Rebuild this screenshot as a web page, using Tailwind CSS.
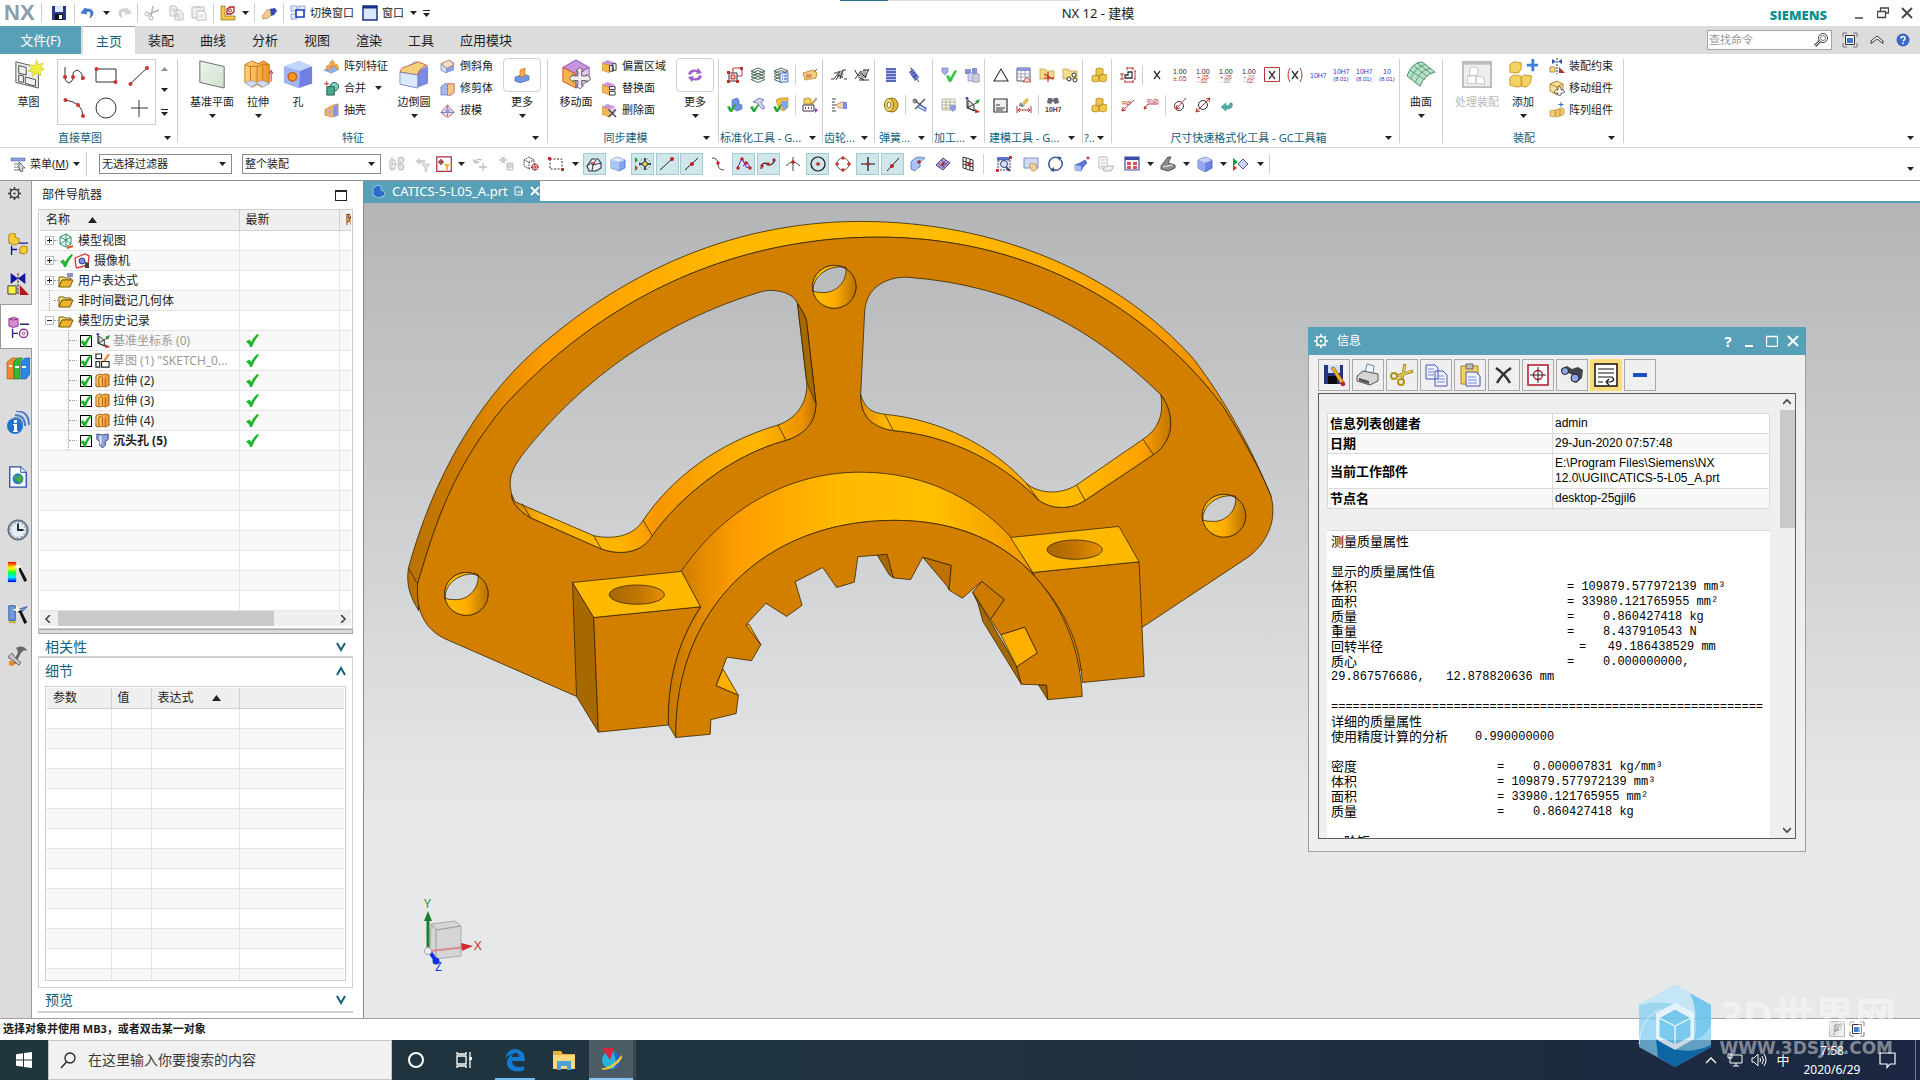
<!DOCTYPE html>
<html lang="zh-CN">
<head>
<meta charset="utf-8">
<title>NX 12 - 建模</title>
<script src="https://cdn.jsdelivr.net/npm/@tailwindcss/browser@4"></script>
</head>
<body class="relative flex h-screen flex-col overflow-hidden bg-white font-['Noto_Sans','Noto_Sans_CJK_SC',sans-serif] text-[11px] leading-[14px] text-[#1c1c1c]">

<!-- shared gradients: kept rendered, a display:none svg drops its paint servers -->
<svg class="absolute size-0" aria-hidden="true">
 <defs>
  <linearGradient id="gOr" x1="0" y1="0" x2="1" y2="0"><stop offset="0" stop-color="#ffd27a"/><stop offset="1" stop-color="#f0932a"/></linearGradient>
  <linearGradient id="gPl" x1="0" y1="0" x2="1" y2="1"><stop offset="0" stop-color="#eef3ee"/><stop offset="1" stop-color="#cfe3cf"/></linearGradient>
  <linearGradient id="gRain" x1="0" y1="0" x2="0" y2="1"><stop offset="0" stop-color="#f00"/><stop offset=".3" stop-color="#ff0"/><stop offset=".55" stop-color="#0f4"/><stop offset=".75" stop-color="#0ef"/><stop offset="1" stop-color="#00f"/></linearGradient>
 </defs>
</svg>

<!-- icon library -->
<svg class="hidden" aria-hidden="true">
 <symbol id="tri" viewBox="0 0 7 4"><path d="M0 0h7L3.500 4z" fill="#222"/></symbol>
 <symbol id="tribar" viewBox="0 0 7 7"><path d="M0 0h7v1H0zM0 3h7L3.500 7z" fill="#222"/></symbol>
 <symbol id="check" viewBox="0 0 14 14"><path d="M0 8l4-2 1.500 2.500Q8 3 12.500 0L14 1Q9 7 6.500 14H4.500Q3 10 0 8z" fill="#1fb52f"/></symbol>
 <symbol id="save" viewBox="0 0 16 16"><path d="M1 1h14v14H1z" fill="#29388c"/><path d="M4 1h8v6H4z" fill="#dfe8fa"/><path d="M4 9h8v6H4z" fill="#111"/><path d="M8 10h3v4H8z" fill="#fff"/></symbol>
 <symbol id="undo" viewBox="0 0 16 16"><path d="M5 3L1 8l6 1-1-2c4-2 6 1 4 6 5-4 4-10-4-9z" fill="#3f7ad6" stroke="#2a56a8" stroke-width=".6"/></symbol>
 <symbol id="redo" viewBox="0 0 16 16"><path d="M11 3l4 5-6 1 1-2c-4-2-6 1-4 6-5-4-4-10 4-9z" fill="#d4d4d4" stroke="#b5b5b5" stroke-width=".6"/></symbol>
 <symbol id="cutg" viewBox="0 0 16 16"><path d="M9 1L7 11M15 5L5 9" stroke="#b5b5b5" stroke-width="1.500"/><circle cx="3" cy="9" r="2" fill="none" stroke="#b5b5b5"/><circle cx="7" cy="13" r="2" fill="none" stroke="#b5b5b5"/></symbol>
 <symbol id="copyg" viewBox="0 0 16 16"><path d="M2 1h5l2 2v8H2zM7 5h5l3 3v7H7z" fill="#f4f4f4" stroke="#bcbcbc"/><path d="M9 9h4M9 11h4M9 13h4M3.500 4h3M3.500 6h3" stroke="#ccc"/></symbol>
 <symbol id="pasteg" viewBox="0 0 16 16"><path d="M1 2h12v11H1z" fill="#eee" stroke="#bcbcbc"/><path d="M5 1h4v2H5z" fill="#ccc"/><path d="M6 6h6l3 3v6H6z" fill="#fff" stroke="#bcbcbc"/><path d="M8 10h5M8 12h5" stroke="#ccc"/></symbol>
 <symbol id="mcs" viewBox="0 0 16 16"><path d="M1 1h4v10h10v4H1z" fill="#f2c84b" stroke="#8a6a10" stroke-width=".7"/><path d="M7 4l3-2h4v5l-3 2H7z" fill="#fff" stroke="#b01828" stroke-width="1.300"/><circle cx="10" cy="5.500" r="1.500" fill="none" stroke="#b01828"/></symbol>
 <symbol id="hand" viewBox="0 0 16 16"><path d="M1 11l5-6 5-1 1 5-5 4-5 1z" fill="#f0cd8a" stroke="#a97c3c" stroke-width=".6"/><path d="M9 4l5-1 2 3-3 4-3 1z" fill="#3948b8"/></symbol>
 <symbol id="switch" viewBox="0 0 16 16"><path d="M1 1h6v5H1zM9 1h6v5H9zM1 9h6v5H1z" fill="#e6eefc" stroke="#8ca4cf"/><path d="M6 5h8v7H6z" fill="#fff" stroke="#1b38c8" stroke-width="1.600"/></symbol>
 <symbol id="win" viewBox="0 0 16 16"><path d="M1 1h14v14H1z" fill="#dbe8fb" stroke="#1c2f86" stroke-width="1.500"/><path d="M1 1h14v2.500H1z" fill="#1c2f86"/></symbol>
 <!-- large -->
 <symbol id="sketch" viewBox="0 0 32 32"><path d="M2 3l24 6v22L2 25z" fill="#eef0ee" stroke="#555"/><path d="M5 7l8 2v8l-8-2zM5 17l5 1v7l-5-1zM12 19l11 3v7l-11-3z" fill="none" stroke="#444"/><path d="M24 1l2 5 5-2-2 5 4 2-5 2 1 5-5-3-4 4v-5l-5-1 4-3-3-4 6 1z" fill="#f1ef3e" stroke="#b8b822" stroke-width=".5"/></symbol>
 <symbol id="plane" viewBox="0 0 32 32"><path d="M3 2l26 6v23L3 25z" fill="url(#gPl)" stroke="#666"/></symbol>
 <symbol id="extr" viewBox="0 0 32 32"><path d="M2 6l8-4 6 3 6-3 6 4v20l-8 4-5-3-5 3-8-5z" fill="url(#gOr)" stroke="#c57516"/><path d="M2 6l6 2 7 0 6-2 7 0M8 8v20M15 8v17M21 7v21" fill="none" stroke="#c57516"/><path d="M2 25l7 5 6-4 6 4 7-4-7-3-6 2-6-2z" fill="#cfdcf8" stroke="#7f93cf" stroke-width=".6"/><path d="M30 24V14M28 16l2-4 2 4" stroke="#b22" fill="none"/></symbol>
 <symbol id="hole" viewBox="0 0 32 32"><path d="M1 8l16-6 14 6v18l-15 5L1 25z" fill="#8ea2ec"/><path d="M1 8l16-6 14 6-13 5z" fill="#c2d5fb"/><path d="M18 13l13-5v18l-14 5z" fill="#6f80de"/><path d="M1 8l17 5-1 18-16-6z" fill="#9fb4f3"/><circle cx="10" cy="19" r="4.500" fill="#f59a1e" stroke="#d25b1a" stroke-width="1.500"/></symbol>
 <symbol id="blend" viewBox="0 0 32 32"><path d="M1 14l16-12 14 6v18l-12 5-18-4z" fill="#7c8be2"/><path d="M8 8L18 2l13 6-7 3z" fill="#c2d5fb"/><path d="M1 14q2-6 7-6L21 3l9 4q-9 3-10 10z" fill="#f5d27c" stroke="#c33" stroke-width=".8"/><path d="M1 14l19 3v14L1 27z" fill="#dbe9fc" stroke="#5b78c0" stroke-width=".7"/></symbol>
 <symbol id="moveface" viewBox="0 0 32 32"><path d="M2 9l14-8 14 8-14 7z" fill="#c793dd" stroke="#8a4fa8"/><path d="M2 9l14 7v15L2 24z" fill="#f7b64b" stroke="#d2452a"/><path d="M16 16l14-7v14l-14 8z" fill="#e9c7ef" stroke="#8a4fa8"/><path d="M20 9l4 4h-2v5h5v-2l5 5-5 4v-2h-5v5h2l-4 4-4-4h2v-5h-5v2l-4-4 4-5v2h5v-5h-2z" fill="#eee" stroke="#555"/></symbol>
 <symbol id="surf" viewBox="0 0 32 32"><path d="M1 18Q6 4 17 3l14 11Q20 16 15 29z" fill="#b9e0c8" stroke="#3f8a63"/><path d="M5 21Q10 8 21 6M10 25Q14 12 26 10M4 12l16 10M8 7l15 12M12 4l15 12" fill="none" stroke="#3f8a63" stroke-width=".8"/></symbol>
 <symbol id="procasm" viewBox="0 0 32 32"><path d="M1 3h30v27H1z" fill="#eee" stroke="#bbb" stroke-width="2"/><path d="M1 2h30v4H1z" fill="#bbb"/><path d="M6 18h9v8H6zM15 18l9 2v7l-9-1zM8 10l5-2 4 2v7l-9 1z" fill="#fff" stroke="#c4c4c4"/></symbol>
 <symbol id="addc" viewBox="0 0 32 32"><path d="M2 6l4-3 8 1v7l-3 4-9-1z" fill="#f5d264" stroke="#c79722"/><path d="M2 20l4-3 8 1 1 10-4 2-9-2zM14 20l3-3 8 1-1 8-5 4-5-1z" fill="#f5d264" stroke="#c79722"/><path d="M25 0h3v5h4v3h-4v5h-3V8h-5V5h5z" fill="#3f7fd8"/></symbol>
 <symbol id="more1" viewBox="0 0 16 16"><path d="M1 10l9-3 5 2v4l-9 3-5-2z" fill="#6f95e2" stroke="#3e62b4" stroke-width=".6"/><path d="M6 3l5-2v8l-5 1z" fill="#f4a952" stroke="#bf6f1c" stroke-width=".6"/></symbol>
 <symbol id="more2" viewBox="0 0 16 16"><path d="M1 7q2-6 9-4l1-2 4 5-6 1 1-2Q5 4 4 8zM15 9q-2 6-9 4l-1 2-4-5 6-1-1 2q5 1 6-3z" fill="#9b63c4"/></symbol>
 <!-- small -->
 <symbol id="arrf" viewBox="0 0 16 16"><path d="M0 12l9-5 7 4-8 4z" fill="#8db1ec" stroke="#4b6cb8" stroke-width=".5"/><path d="M2 8l3-2 2 1v4l-3 1zM6 4l3-3 2 2v5l-3 1zM11 7l2-2 2 2v3l-2 1z" fill="#f5a648" stroke="#c87a1a" stroke-width=".5"/></symbol>
 <symbol id="unite" viewBox="0 0 16 16"><circle cx="11" cy="6" r="4.500" fill="#7fd0bc" stroke="#1d5c50"/><path d="M3 6h8v9H3z" fill="#49a98d" stroke="#1d5c50"/><path d="M3 0v5M0 3h5" stroke="#c22"/></symbol>
 <symbol id="shell" viewBox="0 0 16 16"><path d="M1 7l9-5 5-1v12l-6 2-8-2z" fill="#f1b269" stroke="#a8682a" stroke-width=".6"/><path d="M10 4l5-3v12l-5 2z" fill="#7f96e4"/><path d="M3 8l5-2v6l-5-1z" fill="#caa"/></symbol>
 <symbol id="chamf" viewBox="0 0 16 16"><path d="M1 5l9-4 5 3v8l-8 3-6-3z" fill="#8ea2ec"/><path d="M1 5l9-4 5 5-8 4z" fill="#f1dfc0" stroke="#c55" stroke-width=".8"/><path d="M1 5l6 5v5l-6-3z" fill="#cfe0ff" stroke="#557" stroke-width=".5"/></symbol>
 <symbol id="trim" viewBox="0 0 16 16"><path d="M1 6l4-3h10v9l-3 3H1z" fill="#a5b7f2" stroke="#4d5fb0" stroke-width=".6"/><path d="M8 3h7v9l-3 3H8z" fill="#f6c489" stroke="#c33" stroke-width=".8" stroke-dasharray="2 1"/></symbol>
 <symbol id="draft" viewBox="0 0 16 16"><path d="M8 2l7 8-6 5H7l-6-5z" fill="#f4dfe3" stroke="#b35" stroke-width=".8"/><path d="M8 2v12M1 10h14" stroke="#57a" /><path d="M5 8l3-3 3 3-3 4z" fill="#8aa3e8"/></symbol>
 <symbol id="fcube" viewBox="0 0 16 16"><path d="M0 4l6-3 8 3-6 3z" fill="#c793dd"/><path d="M0 4l8 3v8l-8-3z" fill="#f7b64b" stroke="#c66a1d" stroke-width=".5"/><path d="M8 7l6-3v7l-6 4z" fill="#e5c3ec"/></symbol>
 <symbol id="off" viewBox="0 0 16 16"><use href="#fcube"/><path d="M8 7h4v6H8zM11 5h4v7h-4z" fill="#fff" stroke="#333"/></symbol>
 <symbol id="repl" viewBox="0 0 16 16"><use href="#fcube"/><path d="M8 6h6v3H8zM8 11h6v4H8z" fill="#fff" stroke="#333"/></symbol>
 <symbol id="del" viewBox="0 0 16 16"><use href="#fcube"/><path d="M7 7l8 8M15 7l-8 8" stroke="#444" stroke-width="1.400"/></symbol>
 <symbol id="nodes" viewBox="0 0 16 16"><path d="M6 1h9v8H6z" fill="#fff" stroke="#b33"/><path d="M2 6h8v8H2z" fill="#fff" stroke="#333"/><path d="M4 8h4v4H4z" fill="#f6c79a" stroke="#b33"/><path d="M0 4h3v3H0zM0 13h3v3H0zM9 13h3v3H9zM13 0h3v3h-3z" fill="#b33"/></symbol>
 <symbol id="layers" viewBox="0 0 16 16"><path d="M1 12.500l7-3 7 3-7 3zM1 9.500l7-3 7 3-7 3zM1 6.500l7-3 7 3-7 3zM1 4l7-3 7 3-7 3z" fill="#f5f9f5" stroke="#4e6b5a"/></symbol>
 <symbol id="layers2" viewBox="0 0 16 16"><path d="M1 12.500l7-3 7 3-7 3zM1 9.500l7-3 7 3-7 3zM1 6.500l7-3 7 3-7 3zM1 4l7-3 7 3-7 3z" fill="#f5f9f5" stroke="#4e6b5a"/><path d="M7 6h8v9H7z" fill="#dfe8ff" stroke="#5b74c4"/><path d="M9 9h1M11 9h3M9 12h1M11 12h3" stroke="#35a"/></symbol>
 <symbol id="tag" viewBox="0 0 16 16"><path d="M1 6l10-3 4 3-1 5-11 2z" fill="#f8cd7c" stroke="#b9812a" stroke-width=".8"/><path d="M4 8h6M4 10h5" stroke="#b55"/><path d="M12 5l3-3" stroke="#555"/></symbol>
 <symbol id="chk1" viewBox="0 0 16 16"><path d="M5 3l5-2 2 2v4l3 1v4l-5 2-5-3z" fill="#6f95e2" stroke="#3e62b4" stroke-width=".6"/><path d="M0 10l3-1 1 3 4-5 1 1-4 7H3z" fill="#28a53a"/></symbol>
 <symbol id="chk2" viewBox="0 0 16 16"><path d="M3 5l6-4 5 2-3 2 4 6-3 1-5-6z" fill="#cfd6ea" stroke="#55a" stroke-width=".7"/><path d="M0 10l3-1 1 3 4-5 1 1-4 7H3z" fill="#28a53a"/></symbol>
 <symbol id="chk3" viewBox="0 0 16 16"><path d="M3 3l5-2h7v9l-4 4-5-2z" fill="#f2bd3e" stroke="#a77c18" stroke-width=".6"/><path d="M8 4h7v7l-5 2z" fill="#7fa6ea"/><path d="M0 10l3-1 1 3 4-5 1 1-4 7H3z" fill="#28a53a"/></symbol>
 <symbol id="box4" viewBox="0 0 16 16"><path d="M2 2l4-1 3 1v5H2z" fill="#f5d264" stroke="#c79722"/><path d="M1 8h11v6H1z" fill="#fff" stroke="#335"/><path d="M3 11h1M6 11h1M9 11h1" stroke="#b33" stroke-width="2"/><path d="M9 7l5-6 1 1-5 6z" fill="#e8b04a" stroke="#733" stroke-width=".4"/><path d="M13 11l3 2-3 3z" fill="#93c"/></symbol>
 <symbol id="gear1" viewBox="0 0 16 16"><path d="M6 4l7-1-1 7-5 1z" fill="#b5b5b5"/><path d="M0 12h3l3-4h2L5 13M9 12l3-9h3M13 12h3M3 6h5l1-2M8 8l4 3" stroke="#333" fill="none"/></symbol>
 <symbol id="gear2" viewBox="0 0 16 16"><path d="M5 5l7-3 1 8-6 3z" fill="#aaa"/><path d="M1 3q1 5 5 6M15 2l-4 8M5 13h10M1 12l6-8M9 3h6M7 6l5 5M4 10l6 3" stroke="#333" fill="none"/></symbol>
 <symbol id="dash" viewBox="0 0 16 16"><path d="M1 2h4M1 5h3M1 8h4M1 11h3M1 14h4" stroke="#444"/><path d="M5 8l5-3h3v6H8z" fill="#f4d6a8" stroke="#a55" stroke-width=".6"/><path d="M12 5h4v7h-4z" fill="#7f8de0"/></symbol>
 <symbol id="spr1" viewBox="0 0 16 16"><path d="M3 1h10v14H3z" fill="#b9c2f0"/><path d="M3 2h10M3 5h10M3 8h10M3 11h10M3 14h10" stroke="#3a4aa8" stroke-width="1.500"/></symbol>
 <symbol id="spr2" viewBox="0 0 16 16"><path d="M4 1q3 0 2 3" fill="none" stroke="#555"/><path d="M3 5l4-3 6 8-4 4z" fill="#4555b4"/><path d="M4 7l4-3M6 9l4-3M8 12l4-3" stroke="#c9d0f4" stroke-width=".7"/><path d="M11 12l2 3" stroke="#555"/></symbol>
 <symbol id="ring" viewBox="0 0 16 16"><ellipse cx="9" cy="8" rx="6" ry="7" fill="#e0b93a" stroke="#8a6a10"/><ellipse cx="6" cy="8" rx="4.500" ry="6.500" fill="#f5dc78" stroke="#8a6a10"/><ellipse cx="6" cy="8" rx="2" ry="3" fill="#fff" stroke="#8a6a10"/></symbol>
 <symbol id="scis" viewBox="0 0 16 16"><path d="M2 3l12 9M3 12L13 2" stroke="#555" stroke-width="1.400"/><path d="M7 8l7 3-1 3-7-4z" fill="none" stroke="#5a74d8" stroke-width="1.300"/><circle cx="3" cy="4" r="2" fill="none" stroke="#555"/></symbol>
 <symbol id="chkv" viewBox="0 0 16 16"><path d="M1 1h6v4L4 8 1 5z" fill="#a6b0e4" stroke="#6672b8" stroke-width=".6"/><path d="M5 9l3-1 1 3 5-8 2 1-6 11H8z" fill="#35c245"/></symbol>
 <symbol id="gridv" viewBox="0 0 16 16"><path d="M1 2h13v11H1zM1 5h13M1 8h13M1 11h13M5 2v11M9 2v11" fill="#f8f8ec" stroke="#a8a890" stroke-width=".8"/><path d="M9 8h6v4l-3 3-3-3z" fill="#8c9be0"/></symbol>
 <symbol id="bld" viewBox="0 0 16 16"><path d="M1 2h6v5H1zM8 1h5v6H8z" fill="#8793d8"/><path d="M4 6h6v8H4z" fill="#cfd6f4" stroke="#6672b8" stroke-width=".6"/><path d="M9 7h6v8H9z" fill="#fff" stroke="#889"/><path d="M10 9h4M10 11h4M10 13h4" stroke="#99a"/></symbol>
 <symbol id="csys" viewBox="0 0 16 16"><path d="M4 3l6 5v6L4 11z" fill="#dfe8e6" stroke="#333"/><path d="M3 0v11l12 4M3 11l11-6" fill="none" stroke="#333"/><path d="M11 4l5-2-2 5z" fill="#1c9a3c"/><path d="M1 2h4L3 0z" fill="#22c"/><path d="M11 12l5 3-5 1z" fill="#c22"/></symbol>
 <symbol id="triup" viewBox="0 0 16 16"><path d="M8 2l7 12H1z" fill="none" stroke="#333" stroke-width="1.100"/></symbol>
 <symbol id="tbl" viewBox="0 0 16 16"><path d="M1 1h13v13H1z" fill="#fff" stroke="#557"/><path d="M1 1h13v3H1z" fill="#8c97d8"/><path d="M1 7h13M1 10h13M5 4v10M9 4v10" stroke="#889" stroke-width=".7"/><path d="M11 10l4 5H7z" fill="#f7dada" stroke="#b33" stroke-width=".8"/></symbol>
 <symbol id="fold1" viewBox="0 0 16 16"><path d="M1 2h5l1 2h8v8H1z" fill="#f5dc86" stroke="#b8963a" stroke-width=".7"/><path d="M9 5v10M5 11h10M5 7l9 5" stroke="#c03030" stroke-width="1.200"/></symbol>
 <symbol id="fold2" viewBox="0 0 16 16"><path d="M1 2h5l1 2h8v8H1z" fill="#f5dc86" stroke="#b8963a" stroke-width=".7"/><circle cx="7" cy="12" r="2" fill="#fff" stroke="#333"/><circle cx="12" cy="8" r="2" fill="#fff" stroke="#333"/><circle cx="13" cy="13" r="2" fill="#fff" stroke="#333"/></symbol>
 <symbol id="note" viewBox="0 0 16 16"><path d="M1 2h13v13H1z" fill="#f2f2f2" stroke="#333" stroke-width="1.200"/><path d="M3 8h4M3 11h9M3 13h7" stroke="#333"/></symbol>
 <symbol id="brush" viewBox="0 0 16 16"><path d="M6 6l5-5 2 2-4 5z" fill="#e6b84a"/><path d="M4 5l5 4-3 1-3-1z" fill="#8a8a8a"/><path d="M2 13h12M1 9v7M15 9v7M4 11l-2 2 2 2M12 11l2 2-2 2" stroke="#b33" fill="none"/></symbol>
 <symbol id="bin7" viewBox="0 0 16 16"><path d="M3 1h4l1 2 1-2h4l1 5-4 1-2-3-2 3-4-1z" fill="#667"/><text x="0" y="15" font-size="7" font-weight="700" fill="#633" font-family="Liberation Sans">10H7</text></symbol>
 <symbol id="boxes" viewBox="0 0 16 16"><path d="M5 2l3-1 4 1v5l-3 2-4-1zM1 9l3-1 4 1v5l-3 1-4-1zM8 9l3-2 5 1v5l-3 2-5-1z" fill="#efc54a" stroke="#b08a1e" stroke-width=".8"/></symbol>
 <symbol id="dim" viewBox="0 0 16 16"><path d="M8 5h4v6H5v-3h3z" fill="none" stroke="#333" stroke-width="1.300"/><path d="M7 1h6M7 0v3M13 0v3M2 7v5M0 7h4M0 12h4M15 4v8M14 4h2M14 12h2M5 15h8M5 13v3M13 13v3" stroke="#b33" fill="none"/></symbol>
 <symbol id="X" viewBox="0 0 16 16"><path d="M5 4l6 8M11 4l-6 8" stroke="#333" stroke-width="1.300"/></symbol>
 <symbol id="Xb" viewBox="0 0 16 16"><path d="M.5.500h15v14H.5z" fill="#fff" stroke="#b33"/><path d="M5 4l6 8M11 4l-6 8" stroke="#333" stroke-width="1.300"/></symbol>
 <symbol id="Xp" viewBox="0 0 16 16"><path d="M3 1Q-1 8 3 15M13 1q4 7 0 14" fill="none" stroke="#b33"/><path d="M5 4l6 8M11 4l-6 8" stroke="#333" stroke-width="1.300"/></symbol>
 <symbol id="t1" viewBox="0 0 16 16"><text x="1" y="7" font-size="7" fill="#222" font-family="Liberation Sans">1.00</text><text x="1" y="14" font-size="7" fill="#b33" font-family="Liberation Sans">±.05</text></symbol>
 <symbol id="t2" viewBox="0 0 16 16"><text x="1" y="7" font-size="7" fill="#222" font-family="Liberation Sans">1.00</text><text x="2" y="12" font-size="6" fill="#b33" font-family="Liberation Sans">+.05</text><text x="2" y="16" font-size="6" fill="#b33" font-family="Liberation Sans">-.02</text></symbol>
 <symbol id="t3" viewBox="0 0 16 16"><text x="1" y="7" font-size="7" fill="#222" font-family="Liberation Sans">1.00</text><text x="2" y="12" font-size="6" fill="#b33" font-family="Liberation Sans">+.05</text><text x="2" y="16" font-size="6" fill="#888" font-family="Liberation Sans">-.00</text></symbol>
 <symbol id="t4" viewBox="0 0 16 16"><text x="1" y="7" font-size="7" fill="#222" font-family="Liberation Sans">1.00</text><text x="2" y="12" font-size="6" fill="#888" font-family="Liberation Sans">+.00</text><text x="2" y="16" font-size="6" fill="#b33" font-family="Liberation Sans">-.02</text></symbol>
 <symbol id="h1" viewBox="0 0 16 16"><text x="0" y="11" font-size="7" fill="#33b" font-family="Liberation Sans">10H7</text></symbol>
 <symbol id="h2" viewBox="0 0 16 16"><text x="0" y="7" font-size="7" fill="#33b" font-family="Liberation Sans">10H7</text><text x="0" y="14" font-size="6" fill="#33b" font-family="Liberation Sans">(8.01)</text></symbol>
 <symbol id="h3" viewBox="0 0 16 16"><text x="4" y="7" font-size="7" fill="#33b" font-family="Liberation Sans">10</text><text x="0" y="14" font-size="6" fill="#33b" font-family="Liberation Sans">(8.01)</text></symbol>
 <symbol id="r1" viewBox="0 0 16 16"><path d="M2 14L14 3M2 14l1-4M2 14l4-1" stroke="#b33" fill="none"/><text x="2" y="8" font-size="6" fill="#b33" font-family="Liberation Sans">RØ</text></symbol>
 <symbol id="r2" viewBox="0 0 16 16"><path d="M1 12l4-5h10M1 12l1-3M1 12l3-1" stroke="#b33" fill="none"/><text x="4" y="6" font-size="6" fill="#b33" font-family="Liberation Sans">R|Ø|</text></symbol>
 <symbol id="r3" viewBox="0 0 16 16"><circle cx="7" cy="9" r="4.500" fill="none" stroke="#333"/><path d="M4 12L14 1M4 12l1-4M4 12l4-1" stroke="#b33" fill="none"/></symbol>
 <symbol id="r4" viewBox="0 0 16 16"><circle cx="8" cy="8" r="4.500" fill="none" stroke="#333"/><path d="M1 15L15 1M1 15l1-4M1 15l4-1M15 1l-1 4M15 1l-4 1" stroke="#b33" fill="none"/></symbol>
 <symbol id="ret" viewBox="0 0 16 16"><path d="M3 10l5-4v3q4 0 4-3l2 0q2 6-6 6v2z" fill="#4fb0a8" stroke="#2c817a" stroke-width=".5"/></symbol>
 <symbol id="cons" viewBox="0 0 16 16"><path d="M3 1l4 2.500L3 6zM13 1L9 3.500 13 6z" fill="#35a"/><path d="M8 0v16" stroke="#333" stroke-dasharray="2 1"/><path d="M1 9h5v5H1z" fill="#f5e46a" stroke="#a87"/><path d="M10 9v6h6z" fill="#b03030"/></symbol>
 <symbol id="movec" viewBox="0 0 16 16"><path d="M1 4l7-3 6 3v7l-6 4-7-4z" fill="#f9dda0" stroke="#b98a2e"/><path d="M1 4l7 3 6-3M8 7v8" stroke="#b98a2e" fill="none"/><path d="M10 6l2 2v2h2l2 2-2 1h-2v2l-2 1-1-2v-1H6l-1-1 2-2h2V8z" fill="#fff" stroke="#333" stroke-width=".7"/></symbol>
 <symbol id="arrc" viewBox="0 0 16 16"><path d="M1 9l3-1 3 1v5l-3 1-3-1zM6 8l3-1 3 1v5l-3 2-3-1zM10 7l2-1 3 1v5l-3 2-2-1z" fill="#f9cf72" stroke="#b98a2e" stroke-width=".7"/><path d="M12 0v5M9.500 2.500h5" stroke="#36c"/></symbol>
 <!-- selection bar -->
 <symbol id="menu" viewBox="0 0 16 16"><path d="M1 2h14v3H1z" fill="#8ea2dc" stroke="#5266a8" stroke-width=".6"/><path d="M4 8h8M4 11h8M4 14h6" stroke="#777"/><path d="M9 6l6 6h-3l1 3-2 1-1-3-1 1z" fill="#ddd" stroke="#444" stroke-width=".7"/></symbol>
 <symbol id="sg1" viewBox="0 0 16 16"><path d="M1 4h5v9H1zM3 1v14M3 8h9" fill="none" stroke="#b9b9b9"/><circle cx="12" cy="4" r="3" fill="#e4e4e4" stroke="#b9b9b9"/><circle cx="12" cy="11" r="3" fill="#e4e4e4" stroke="#b9b9b9"/></symbol>
 <symbol id="sg2" viewBox="0 0 16 16"><path d="M1 5l5-3v2h5v3H6v2z" fill="#cfcfcf"/><path d="M8 8h8l-3 4v4l-2-1v-3z" fill="#e2e2e2" stroke="#bbb" stroke-width=".6"/></symbol>
 <symbol id="selp" viewBox="0 0 16 16"><path d="M.8.800h14.500v14.500H.8z" fill="#fff" stroke="#b3283a" stroke-width="1.200"/><path d="M5 3v6M2 6h6" stroke="#333"/><circle cx="5" cy="6" r="2" fill="none" stroke="#b33"/><path d="M8 8h6l-2 3v3h-2v-3z" fill="#f0b73a"/></symbol>
 <symbol id="sg3" viewBox="0 0 16 16"><path d="M2 7q1-5 7-3M2 7L0 3M2 7l4-1M10 7v8M6 11h8" fill="none" stroke="#bdbdbd" stroke-width="1.300"/></symbol>
 <symbol id="sg4" viewBox="0 0 16 16"><path d="M1 3h8v2H1zM3 1h4v6H3z" fill="#cfcfcf"/><path d="M9 7h6v7H9zM9 9h6M9 11h6" fill="#eee" stroke="#bdbdbd"/></symbol>
 <symbol id="sel5" viewBox="0 0 16 16"><path d="M1 4l5-3 5 3v6l-5 3-5-3zM1 4l5 2 5-2M6 6v7" fill="none" stroke="#333" stroke-dasharray="1.500 1"/><circle cx="12" cy="11" r="3" fill="#fff" stroke="#b33"/><path d="M12 7v8M8 11h8" stroke="#b33"/></symbol>
 <symbol id="sel6" viewBox="0 0 16 16"><path d="M2 3h12v10H2z" fill="none" stroke="#333" stroke-dasharray="2 1.500"/><path d="M0 1h3v3H0zM13 12h3v3h-3z" fill="#b33"/></symbol>
 <symbol id="s1" viewBox="0 0 16 16"><path d="M1 10l5-7 6 0 3 4v5l-5 3H3z" fill="#e9eef5" stroke="#334" stroke-width="1.100"/><path d="M1 10q4-4 6-1l-1 6M7 9l3-5M7 9l8-2" stroke="#334" fill="none"/><path d="M5 7h4" stroke="#c33" stroke-width="1.500"/></symbol>
 <symbol id="cube" viewBox="0 0 16 16"><path d="M1 4l6-3 8 3v8l-6 3-8-3z" fill="#7fa6ea" stroke="#3e62b4" stroke-width=".7"/><path d="M1 4l8 2v9l-8-3z" fill="#a9c6f7"/><path d="M1 4l6-3 8 3-6 2z" fill="#dbe9fc"/></symbol>
 <symbol id="s3" viewBox="0 0 16 16"><path d="M0 1l3 3-3 3z" fill="#1c9a3c"/><path d="M0 9l3 3-3 3z" fill="#c33"/><circle cx="10" cy="8" r="5.500" fill="none" stroke="#555" stroke-dasharray="1 2"/><path d="M10 2v12M4 8h12" stroke="#222" stroke-width="1.500" stroke-dasharray="3 6"/><circle cx="10" cy="8" r="2.500" fill="#e9da5a" stroke="#333"/></symbol>
 <symbol id="s4" viewBox="0 0 16 16"><path d="M1 14L13 3" stroke="#222"/><circle cx="13" cy="3" r="2" fill="#b22"/></symbol>
 <symbol id="s5" viewBox="0 0 16 16"><path d="M1 14L14 2" stroke="#222"/><circle cx="8" cy="8" r="2" fill="#b22"/></symbol>
 <symbol id="s6" viewBox="0 0 16 16"><path d="M2 2q6 0 6 6t6 6" stroke="#444" fill="none"/><circle cx="8" cy="7" r="1.700" fill="#b22"/></symbol>
 <symbol id="s7" viewBox="0 0 16 16"><path d="M1 13L6 2l4 9 4 1-3-6-4 4" stroke="#62c" fill="none"/><circle cx="2" cy="12" r="1.700" fill="#b22"/><circle cx="6" cy="3" r="1.700" fill="#b22"/><circle cx="10" cy="7" r="1.700" fill="#b22"/><circle cx="14" cy="12" r="1.700" fill="#b22"/></symbol>
 <symbol id="s8" viewBox="0 0 16 16"><path d="M1 13q1-8 6-5t8-4" stroke="#222" fill="none" stroke-width="1.200"/><circle cx="2" cy="10" r="1.700" fill="#b22"/><circle cx="8" cy="8" r="1.700" fill="#b22"/><circle cx="14" cy="4" r="1.700" fill="#b22"/></symbol>
 <symbol id="s9" viewBox="0 0 16 16"><path d="M8 1v14M1 10q7-8 14 0" stroke="#444" fill="none"/><circle cx="8" cy="6" r="1.700" fill="#b22"/></symbol>
 <symbol id="s10" viewBox="0 0 16 16"><circle cx="8" cy="8" r="7" fill="none" stroke="#111" stroke-width="1.200"/><circle cx="8" cy="8" r="1.800" fill="#b22"/></symbol>
 <symbol id="s11" viewBox="0 0 16 16"><circle cx="8" cy="8" r="6" fill="none" stroke="#555"/><circle cx="8" cy="2" r="1.800" fill="#c33"/><circle cx="8" cy="14" r="1.800" fill="#c33"/><circle cx="2" cy="8" r="1.800" fill="#c33"/><circle cx="14" cy="8" r="1.800" fill="#c33"/></symbol>
 <symbol id="s12" viewBox="0 0 16 16"><path d="M8 1v14M1 8h14" stroke="#111" stroke-width="1.200"/><circle cx="8" cy="8" r="1.700" fill="#b22"/></symbol>
 <symbol id="s13" viewBox="0 0 16 16"><path d="M2 15L14 2" stroke="#222"/><circle cx="7" cy="10" r="2" fill="#b22"/></symbol>
 <symbol id="s14" viewBox="0 0 16 16"><path d="M1 6q4-5 7-5t7 1l-5 4v5q-4 1-5 4-2-1-4-2z" fill="#a9c6f7" stroke="#5270b0" stroke-width=".8"/><circle cx="9" cy="6" r="1.800" fill="#b22"/></symbol>
 <symbol id="s15" viewBox="0 0 16 16"><path d="M1 9l7-7 7 5-7 7z" fill="#b6a6e0" stroke="#5a3e92"/><path d="M3 7l7 5M6 4l7 5M4 11l7-7M6 13l7-7" stroke="#5a3e92" fill="none" stroke-width=".7"/><circle cx="8" cy="8" r="1.700" fill="#b22"/></symbol>
 <symbol id="s16" viewBox="0 0 16 16"><path d="M3 1l10 3v11L3 12zM3 5l10 3M3 8l10 3M6 2v11M10 3v11" stroke="#333" fill="#fff"/><circle cx="9" cy="8" r="1.700" fill="#b22"/></symbol>
 <symbol id="v1" viewBox="0 0 16 16"><path d="M1 1h13v3H1z" fill="#5a74d8"/><path d="M2 4h12v10H2z" fill="#eef3ff" stroke="#446" stroke-dasharray="2 1"/><circle cx="8" cy="8" r="3.500" fill="#cfe0ff" stroke="#446"/><path d="M10 11l4 4" stroke="#446" stroke-width="2"/><path d="M0 13h3v3H0zM13 0h3v3h-3z" fill="#c33"/></symbol>
 <symbol id="v2" viewBox="0 0 16 16"><path d="M1 2h14v10H1z" fill="#cfdcf8" stroke="#7f8fc0"/><path d="M6 9l2-2 5 1 1 5-3 2H9z" fill="#f3cf9a" stroke="#a97c3c" stroke-width=".6"/></symbol>
 <symbol id="v3" viewBox="0 0 16 16"><path d="M3 13A6.500 6.500 0 0 1 12 3M13 4a6.500 6.500 0 0 1-9 9" fill="none" stroke="#3c5590" stroke-width="1.500"/><path d="M10 0l4 2-3 3zM6 11l-4 3 4 2z" fill="#3c5590"/></symbol>
 <symbol id="v4" viewBox="0 0 16 16"><path d="M1 9l5-2 5-3 2 3-4 4-2 4-6-1z" fill="#5a74d8" stroke="#2f459c" stroke-width=".6"/><path d="M1 9l6 1v5l-6-1z" fill="#a9c0f7"/><circle cx="14" cy="2" r="1.500" fill="#c33"/></symbol>
 <symbol id="v5" viewBox="0 0 16 16"><path d="M1 1h8v11H1zM3 4h4M3 7h4M3 10h4" fill="#fff" stroke="#b5b5b5"/><path d="M5 13l4-3h7l-3 5H6z" fill="#eee" stroke="#b5b5b5"/></symbol>
 <symbol id="v6" viewBox="0 0 16 16"><path d="M1 1h14v13H1z" fill="#fff" stroke="#3a4da8" stroke-width="1.200"/><path d="M1 1h14v3H1z" fill="#3a4da8"/><path d="M3 6h4v3H3zM9 6h4v3H9zM3 10h4v3H3zM9 10h4v3H9z" fill="#e05050"/></symbol>
 <symbol id="v7" viewBox="0 0 16 16"><path d="M1 10l7-9h3L8 7l7 2v3l-7 3-7-2z" fill="#8e8e8e" stroke="#333" stroke-width=".8"/><path d="M3 11l10-2" stroke="#eee"/></symbol>
 <symbol id="v8" viewBox="0 0 16 16"><path d="M1 4l7-3 7 3v8l-7 4-7-4z" fill="#6f86e0" stroke="#3a4da8" stroke-width=".7"/><path d="M1 4l7 3v9l-7-4z" fill="#93a8f0"/><path d="M1 4l7-3 7 3-7 3z" fill="#c2d0fb"/></symbol>
 <symbol id="v9" viewBox="0 0 16 16"><path d="M0 2l5 4-5 4z" fill="#1c9a3c"/><path d="M0 9l4 3-4 3z" fill="#c33"/><path d="M10 3l5 5-5 5-5-5z" fill="#c9d6ef" stroke="#557"/></symbol>
 <!-- resource bar -->
 <symbol id="b1" viewBox="0 0 24 24"><path d="M2 2l3-2 4 1v4l4 1v5l-4 2-7-2zM14 16l3-2 5 1v6l-3 2-5-1z" fill="#f7cd35" stroke="#a77c18"/><path d="M13 11h10M5 14v10M5 18h6" stroke="#11119c" stroke-width="1.500"/></symbol>
 <symbol id="b2" viewBox="0 0 24 24"><path d="M4 0l8 6-8 6zM20 0l-8 6 8 6z" fill="#1414a8"/><path d="M12 0v24" stroke="#222" stroke-dasharray="3 1"/><path d="M1 14h9v9H1z" fill="#f7f03c" stroke="#333"/><path d="M14 13v11h10z" fill="#b81818"/></symbol>
 <symbol id="b3" viewBox="0 0 24 24"><path d="M1 3q5-3 10 0v8q-5 3-10 0z" fill="#d68bd0" stroke="#8d2f86"/><path d="M1 3q5 3 10 0" fill="none" stroke="#8d2f86"/><path d="M13 9h10M5 14v10M5 19h6" stroke="#222a7c" stroke-width="1.500"/><circle cx="17" cy="19" r="4.500" fill="none" stroke="#8d2f86" stroke-width="1.500"/><circle cx="17" cy="19" r="1.500" fill="none" stroke="#8d2f86"/></symbol>
 <symbol id="b4" viewBox="0 0 24 24"><path d="M1 5l5-4h5l-3 4v17H1z" fill="#f0892c" stroke="#a8560e" stroke-width=".6"/><path d="M8 5l4-4h5l-3 4v17H8z" fill="#36b83c" stroke="#16701c" stroke-width=".6"/><path d="M15 5l4-4h5v16l-4 5h-5z" fill="#2e86dc" stroke="#14508e" stroke-width=".6"/><path d="M3 9h3M9 10h4M16 10h4" stroke="#ffe" stroke-width="2"/></symbol>
 <symbol id="b5" viewBox="0 0 24 24"><circle cx="9" cy="15" r="8" fill="#2272c9"/><path d="M8 9h3v3H8zM7 13h4v7h1v1H7v-1h1v-6H7z" fill="#fff"/><path d="M9 4q10 0 10 11M10 0q13 0 13 14M8 7q8 0 8 7" fill="none" stroke="#4a7cc4" stroke-width="2"/></symbol>
 <symbol id="b6" viewBox="0 0 24 24"><path d="M3 1h12l6 6v16H3z" fill="#fff" stroke="#2c52a8" stroke-width="1.500"/><path d="M15 1v6h6" fill="#dde8fb" stroke="#2c52a8"/><circle cx="12" cy="14" r="6" fill="#2a7fc0"/><path d="M7 12q3-3 4 0t3-3q4 2 3 6t-5 3q-2-3-5-6z" fill="#49a84a"/></symbol>
 <symbol id="b7" viewBox="0 0 24 24"><circle cx="12" cy="12" r="11" fill="#8a94a2" stroke="#4a5462"/><circle cx="12" cy="12" r="9" fill="#e4edfa"/><circle cx="12" cy="12" r="8" fill="none" stroke="#333" stroke-dasharray="1 3.190"/><path d="M12 5v7h6" fill="none" stroke="#222" stroke-width="2"/></symbol>
 <symbol id="b8" viewBox="0 0 24 24"><path d="M1 1h9v22H1z" fill="url(#gRain)"/><path d="M11 6l3 0 8 15-3 2z" fill="#111"/><path d="M12 0l1 5 4 1-4 2-1 5-1-5-4-2 4-1z" fill="#fffbe0"/></symbol>
 <symbol id="b9" viewBox="0 0 24 24"><path d="M2 3h7v16H2zM9 8l13-4-6 6h-7" fill="#6f9be0" stroke="#34579c"/><path d="M12 7l3 0 7 14-3 2z" fill="#111"/><path d="M11 1l1 5 4 1-4 2-1 5-1-5-4-2 4-1z" fill="#fffbe0"/><path d="M2 21h8" stroke="#c6b428" stroke-width="2"/></symbol>
 <symbol id="b10" viewBox="0 0 24 24"><path d="M10 3q8-4 12 3l-4 0-3 3-6 12-3-1 6-12z" fill="#666"/><path d="M4 10q3-2 3 2l8 7-2 3-9-7q-3 0-2-3z" fill="#c9c9c9" stroke="#555"/><circle cx="5" cy="20" r="3" fill="#e78a2a"/></symbol>
 <!-- tree -->
 <symbol id="n1" viewBox="0 0 16 16"><path d="M2 4l6-3 5 3v7l-5 3-6-3zM2 4l6 3 5-3M8 7v7M8 1v6M2 11l6-4 5 4" fill="none" stroke="#1a8f62"/><path d="M9 15l6-2" stroke="#e0502a" stroke-width="2"/></symbol>
 <symbol id="n2" viewBox="0 0 16 16"><path d="M1 5l10-4 4 2-1 9-11 3-1-1z" fill="#fff" stroke="#d33" stroke-width="1.300"/><circle cx="8" cy="8" r="3" fill="#7c92e0" stroke="#339"/><path d="M11 9l4 1v5h-4z" fill="#444"/></symbol>
 <symbol id="folder" viewBox="0 0 16 16"><path d="M1 4h5l1 1h6v2H4L1 14z" fill="#fbe691" stroke="#7a5c0a"/><path d="M1 14l3-7h11l-3 7z" fill="#f0b52a" stroke="#7a5c0a"/></symbol>
 <symbol id="folderx" viewBox="0 0 16 16"><use href="#folder"/><path d="M9 1h6M9 3h6" stroke="#228"/></symbol>
 <symbol id="nsk" viewBox="0 0 16 16"><path d="M1 1h6v5H1zM1 9h4v6H1zM7 9h8v6H7z" fill="#fff" stroke="#222" stroke-width="1.200"/><path d="M9 8l5-7 1.500 1-5 7z" fill="#f0a22a" stroke="#a33" stroke-width=".4"/></symbol>
 <symbol id="nex" viewBox="0 0 16 16"><path d="M1 3l4-2 3 1 3-1 4 1v11l-4 2-3-1-3 1-4-1z" fill="url(#gOr)" stroke="#a85a10"/><path d="M4 5q3-3 4 0v8M11 5v9M4 5v9" fill="none" stroke="#a85a10"/></symbol>
 <symbol id="ncb" viewBox="0 0 16 16"><path d="M2 1q6 2 12 0v6l-3 2v4l-3 3-3-3V9L2 7z" fill="#8ea2dc" stroke="#39477c"/><path d="M6 3v9" stroke="#dfe8ff" stroke-width="2"/></symbol>
 <symbol id="gearo" viewBox="0 0 14 14"><circle cx="7" cy="7" r="4.500" fill="none" stroke="currentColor" stroke-width="1.500"/><circle cx="7" cy="7" r="1.200" fill="currentColor"/><path d="M7 0v2M7 12v2M0 7h2M12 7h2M2 2l1.500 1.500M10.500 10.500L12 12M12 2l-1.500 1.500M3.500 10.500L2 12" stroke="currentColor" stroke-width="1.700"/></symbol>
 <!-- information window -->
 <symbol id="d1" viewBox="0 0 24 24"><path d="M2 2h19v19H2z" fill="#26357f"/><path d="M6 2h12v8H6z" fill="#cfe0fb"/><path d="M6 13h9v8H6z" fill="#0a0a0a"/><path d="M9 5l3-1 10 15-3 2z" fill="#f4b22a" stroke="#7a4a10" stroke-width=".6"/><circle cx="21" cy="21" r="2.300" fill="#b22"/></symbol>
 <symbol id="d2" viewBox="0 0 24 24"><path d="M9 10l2-9 7 2-1 8z" fill="#eaf3ff" stroke="#789"/><path d="M1 13l6-5 15 3v7l-8 4-13-4z" fill="#d5d5d5" stroke="#555"/><path d="M3 15l10 3v3L3 18z" fill="#555"/></symbol>
 <symbol id="d3" viewBox="0 0 24 24"><path d="M15 1l-3 15M23 8L7 13" stroke="#9c7d14" stroke-width="3"/><path d="M15 2l-3 13M22 8L8 13" stroke="#e6cf62" stroke-width="1.500"/><circle cx="4" cy="13" r="3" fill="none" stroke="#b3921c" stroke-width="2"/><circle cx="11" cy="19" r="3" fill="none" stroke="#b3921c" stroke-width="2"/></symbol>
 <symbol id="d4" viewBox="0 0 24 24"><path d="M2 2h9l3 3v11H2zM11 8h8l4 4v11H11z" fill="#eef2ff" stroke="#4a55b0"/><path d="M4 6h6M4 9h6M4 12h6M13 13h7M13 16h8M13 19h8" stroke="#7a86d0"/></symbol>
 <symbol id="d5" viewBox="0 0 24 24"><path d="M3 3h17v18H3z" fill="#f4d264" stroke="#a3821c"/><path d="M8 1h7v5H8z" fill="#bbb" stroke="#666"/><path d="M8 9h10l4 4v10H8z" fill="#eef2ff" stroke="#4a55b0"/><path d="M10 14h8M10 17h9M10 20h9" stroke="#7a86d0"/></symbol>
 <symbol id="d6" viewBox="0 0 24 24"><path d="M4 5q9 6 14 15M19 5Q10 11 5 20" fill="none" stroke="#333" stroke-width="2.500"/></symbol>
 <symbol id="d7" viewBox="0 0 24 24"><path d="M2 2h20v20H2z" fill="#fff" stroke="#b01828" stroke-width="1.500"/><circle cx="12" cy="12" r="4.500" fill="none" stroke="#b01828" stroke-width="1.300"/><path d="M12 4v16M4 12h16" stroke="#222"/></symbol>
 <symbol id="d8" viewBox="0 0 24 24"><path d="M1 6l6-3 5 3 6-2 5 3-1 8-6 5-4-3 1-5-5-2-4 1z" fill="#44444c"/><circle cx="5" cy="8" r="3.500" fill="#8fa4ea" stroke="#222"/><circle cx="15" cy="15" r="4" fill="#8fa4ea" stroke="#222"/></symbol>
 <symbol id="d9" viewBox="0 0 24 24"><path d="M1 1h22v22H1z" fill="#fff" stroke="#111" stroke-width="1.500"/><path d="M4 6h16M4 10h16M4 14h14q4 4-2 5h-3M15 16l-3 3 3 3M4 19h5" fill="none" stroke="#111" stroke-width="1.200"/></symbol>
 <symbol id="d10" viewBox="0 0 24 24"><path d="M5 10h14v4H5z" fill="#1f4fc4"/></symbol>
 <symbol id="full" viewBox="0 0 16 16"><path d="M1 5V1h4M11 1h4v4M15 11v4h-4M5 15H1v-4" fill="none" stroke="#777"/><path d="M3.500 3.500h9v9h-9z" fill="#fff" stroke="#333"/><path d="M5 6h6v5H5z" fill="#3c7cc8"/></symbol>
 <symbol id="flag" viewBox="0 0 16 16"><path d="M.5.500h15v15H.5z" fill="#e6e6e6" stroke="#bbb"/><path d="M4 14l8-12M6 4l7-1-2 6-6 1z" fill="#ccc" stroke="#888" stroke-dasharray="2 1"/></symbol>
</svg>

<!-- title bar -->
<header class="flex h-[26px] shrink-0 items-center">
 <div class="flex flex-[23] items-center">
  <span class="w-[41px] pl-1 font-['Liberation_Sans'] text-[22px] font-bold leading-6 text-[#8b9dab]">NX</span>
  <span class="h-5 w-px bg-[#d0d0d0]"></span>
  <div class="flex items-center pl-1" data-bar="save:25 | undo:22 tri:14 redo:21 | cutg:24 copyg:23 pasteg:23 | mcs:23 tri:12 | hand:23 |"></div>
  <button class="flex items-center gap-1 pl-1"><svg class="size-4"><use href="#switch"/></svg>切换窗口</button>
  <button class="flex items-center gap-1 pl-2"><svg class="size-4"><use href="#win"/></svg>窗口<svg class="ml-0.5 h-1 w-[7px]"><use href="#tri"/></svg></button>
  <button aria-label="自定义" class="pl-1.5"><svg class="h-[7px] w-[7px]"><use href="#tribar"/></svg></button>
 </div>
 <h1 class="text-[13px] leading-5">NX 12 - 建模</h1>
 <div class="flex flex-[17] items-center justify-end pr-px">
  <span class="mr-5 pt-1 font-['Open_Sans'] text-[13px] font-extrabold text-[#0c8f8f]">SIEMENS</span>
  <button aria-label="最小化" class="grid w-6 place-items-center"><svg class="size-3" viewBox="0 0 12 12"><path d="M2 11h8" stroke="#444" stroke-width="1.500"/></svg></button>
  <button aria-label="还原" class="grid w-6 place-items-center"><svg class="size-3" viewBox="0 0 12 12"><path d="M3.500 4V1h8v5H9M.5 4.500h8v6h-8z" fill="none" stroke="#444" stroke-width="1.300"/></svg></button>
  <button aria-label="关闭" class="grid w-6 place-items-center"><svg class="size-3" viewBox="0 0 12 12"><path d="M1 1l10 10M11 1L1 11" stroke="#444" stroke-width="1.800"/></svg></button>
 </div>
</header>
<div class="absolute top-0 left-[840px] h-px w-60 bg-[#dedede]"><div class="h-px w-12 bg-[#2f7088]"></div></div>

<!-- tab strip -->
<nav class="flex h-7 shrink-0 items-center bg-[#dcdcdc] text-[13px] leading-[26px]">
 <button class="h-7 w-[81px] bg-[#57a0b8] text-white">文件(F)</button>
 <button class="ml-0.5 h-7 w-[52px] border-t border-[#9b9b9b] bg-white text-[#12607a]">主页</button>
 <button class="w-[52px]">装配</button><button class="w-[52px]">曲线</button><button class="w-[52px]">分析</button><button class="w-[52px]">视图</button><button class="w-[52px]">渲染</button><button class="w-[52px]">工具</button><button class="w-[78px]">应用模块</button>
 <div class="flex-1"></div>
 <div class="mr-1 flex h-5 w-[125px] items-center border border-[#a5a5a5] bg-white pr-0.5">
  <input aria-label="查找命令" placeholder="查找命令" class="w-0 flex-1 pl-px text-[11px] leading-4 outline-none placeholder:text-[#9a9a9a]">
  <svg class="size-4" viewBox="0 0 16 16"><path d="M7 9l-5 5" stroke="#444" stroke-width="3"/><path d="M7 9l-5 5" stroke="#fff"/><circle cx="10" cy="6" r="4.500" fill="#fff" stroke="#444"/><circle cx="10" cy="6" r="2.500" fill="none" stroke="#777"/></svg>
 </div>
 <button aria-label="全屏" class="grid w-[27px] place-items-center"><svg class="size-4"><use href="#full"/></svg></button>
 <button aria-label="折叠功能区" class="grid w-[27px] place-items-center"><svg class="size-4" viewBox="0 0 16 16"><path d="M2 9l6-5 6 5v2.500L8 7l-6 4.500z" fill="#fff" stroke="#333"/></svg></button>
 <button aria-label="帮助" class="mr-1 grid w-[26px] place-items-center"><svg class="size-3.5" viewBox="0 0 14 14"><circle cx="7" cy="7" r="6.500" fill="#3a68c8"/><path d="M5 5.500q0-2 2-2t2 1.800Q9 6.500 7 8M7 9.500v1.500" fill="none" stroke="#fff" stroke-width="1.600"/></svg></button>
</nav>

<!-- ribbon -->
<section aria-label="功能区" class="flex h-[94px] shrink-0 border-b border-[#d5d5d5]">
 <div class="flex w-[177px] flex-col pt-px">
  <div class="flex h-[77px]">
   <button class="flex w-[57px] flex-col items-center pt-1"><svg class="size-[30px]"><use href="#sketch"/></svg><span class="mt-1.5">草图</span></button>
   <div class="mt-1 grid h-[66px] w-[99px] grid-cols-3 grid-rows-2 place-items-center border border-[#d0d0d0]">
    <button aria-label="轮廓"><svg class="size-6" viewBox="0 0 24 24"><path d="M3 3v12q4 8 8 0V9q4-6 9 1v6" fill="none" stroke="#333"/><g fill="#c33"><circle cx="3" cy="13" r="2"/><circle cx="11" cy="13" r="2"/><circle cx="21" cy="14" r="2"/></g></svg></button>
    <button aria-label="矩形"><svg class="size-6" viewBox="0 0 24 24"><path d="M2 5h20v13H2z" fill="none" stroke="#333"/><circle cx="2.500" cy="5" r="2" fill="#c33"/><circle cx="21.500" cy="18" r="2" fill="#c33"/></svg></button>
    <button aria-label="直线"><svg class="size-6" viewBox="0 0 24 24"><path d="M3 20L20 4" stroke="#333"/><circle cx="3.500" cy="20" r="2" fill="#c33"/><circle cx="20" cy="4" r="2" fill="#c33"/></svg></button>
    <button aria-label="圆弧"><svg class="size-6" viewBox="0 0 24 24"><path d="M3 4q18 2 18 17" fill="none" stroke="#333"/><g fill="#c33"><circle cx="3.500" cy="4" r="2"/><circle cx="16" cy="9" r="2"/><circle cx="21" cy="20" r="2"/></g></svg></button>
    <button aria-label="圆"><svg class="size-6" viewBox="0 0 24 24"><circle cx="12" cy="12" r="10" fill="none" stroke="#333"/></svg></button>
    <button aria-label="点"><svg class="size-6" viewBox="0 0 24 24"><path d="M12 4v17M4 12h17" stroke="#333"/></svg></button>
   </div>
   <div class="flex flex-1 flex-col items-center justify-between pt-3 pr-1 pb-4"><svg class="h-1 w-[7px] rotate-180 opacity-50"><use href="#tri"/></svg><svg class="h-1 w-[7px]"><use href="#tri"/></svg><svg class="size-[7px]"><use href="#tribar"/></svg></div>
  </div>
  <div class="flex h-3 items-center pr-1.5 pl-[58px] text-[#12607a]"><span class="flex-1">直接草图</span><svg class="h-1 w-[7px]"><use href="#tri"/></svg></div>
 </div>
 <span class="mt-[5px] h-[84px] w-px bg-[#d0d0d0]"></span>

 <div class="flex w-[369px] flex-col pt-px">
  <div class="flex h-[77px] pl-2.5">
   <button class="flex w-12 flex-col items-center pt-1"><svg class="size-[30px]"><use href="#plane"/></svg><span class="mt-1.5">基准平面</span><svg class="mt-[5px] h-1 w-[7px]"><use href="#tri"/></svg></button>
   <button class="flex w-[44px] flex-col items-center pt-1"><svg class="size-[30px]"><use href="#extr"/></svg><span class="mt-1.5">拉伸</span><svg class="mt-[5px] h-1 w-[7px]"><use href="#tri"/></svg></button>
   <button class="flex w-[36px] flex-col items-center pt-1"><svg class="size-[30px]"><use href="#hole"/></svg><span class="mt-1.5">孔</span></button>
   <div class="ml-2 flex flex-col">
    <button class="flex h-[22px] items-center gap-[5px]"><svg class="size-[15px]"><use href="#arrf"/></svg>阵列特征</button>
    <button class="flex h-[22px] items-center gap-[5px]"><svg class="size-[15px]"><use href="#unite"/></svg>合并<svg class="ml-1 h-1 w-[7px]"><use href="#tri"/></svg></button>
    <button class="flex h-[22px] items-center gap-[5px]"><svg class="size-[15px]"><use href="#shell"/></svg>抽壳</button>
   </div>
   <button class="ml-1 flex w-11 flex-col items-center pt-1"><svg class="size-[30px]"><use href="#blend"/></svg><span class="mt-1.5">边倒圆</span><svg class="mt-[5px] h-1 w-[7px]"><use href="#tri"/></svg></button>
   <div class="ml-1 flex flex-col">
    <button class="flex h-[22px] items-center gap-[5px]"><svg class="size-[15px]"><use href="#chamf"/></svg>倒斜角</button>
    <button class="flex h-[22px] items-center gap-[5px]"><svg class="size-[15px]"><use href="#trim"/></svg>修剪体</button>
    <button class="flex h-[22px] items-center gap-[5px]"><svg class="size-[15px]"><use href="#draft"/></svg>拔模</button>
   </div>
   <button class="ml-2.5 flex w-[38px] flex-col items-center pt-[3px]"><span class="grid h-[34px] w-[38px] place-items-center rounded-sm border border-[#d0d0d0]"><svg class="size-4"><use href="#more1"/></svg></span><span class="mt-[3px]">更多</span><svg class="mt-[5px] h-1 w-[7px]"><use href="#tri"/></svg></button>
  </div>
  <div class="flex h-3 items-center pr-2 text-[#12607a]"><span class="flex-1 pr-1 text-center">特征</span><svg class="h-1 w-[7px]"><use href="#tri"/></svg></div>
 </div>
 <span class="mt-[5px] h-[84px] w-px bg-[#d0d0d0]"></span>

 <div class="flex w-[170px] flex-col pt-px">
  <div class="flex h-[77px] pl-2">
   <button class="flex w-10 flex-col items-center pt-1"><svg class="size-[30px]"><use href="#moveface"/></svg><span class="mt-1.5">移动面</span></button>
   <div class="ml-1.5 flex flex-col">
    <button class="flex h-[22px] items-center gap-[5px]"><svg class="size-[15px]"><use href="#off"/></svg>偏置区域</button>
    <button class="flex h-[22px] items-center gap-[5px]"><svg class="size-[15px]"><use href="#repl"/></svg>替换面</button>
    <button class="flex h-[22px] items-center gap-[5px]"><svg class="size-[15px]"><use href="#del"/></svg>删除面</button>
   </div>
   <button class="ml-2.5 flex w-[38px] flex-col items-center pt-[3px]"><span class="grid h-[34px] w-[38px] place-items-center rounded-sm border border-[#d0d0d0]"><svg class="size-4"><use href="#more2"/></svg></span><span class="mt-[3px]">更多</span><svg class="mt-[5px] h-1 w-[7px]"><use href="#tri"/></svg></button>
  </div>
  <div class="flex h-3 items-center pr-2 text-[#12607a]"><span class="flex-1 text-center">同步建模</span><svg class="h-1 w-[7px]"><use href="#tri"/></svg></div>
 </div>
 <span class="mt-[5px] h-[84px] w-px bg-[#d0d0d0]"></span>

 <div class="flex w-[103px] flex-col"><div class="flex h-[78px] flex-col pt-1.5 pl-1"><div class="flex h-[30px] items-center" data-bar="nodes:23 layers:23 layers2:23 | tag:23"></div><div class="flex h-[30px] items-center" data-bar="chk1:23 chk2:23 chk3:23 | box4:23"></div></div>
  <div class="flex h-3 items-center pr-1.5 pl-px text-[#12607a]"><span class="flex-1 whitespace-nowrap">标准化工具 - G...</span><svg class="h-1 w-[7px]"><use href="#tri"/></svg></div></div>
 <span class="mt-[5px] h-[84px] w-px bg-[#d0d0d0]"></span>
 <div class="flex w-[51px] flex-col"><div class="flex h-[78px] flex-col pt-1.5 pl-1"><div class="flex h-[30px] items-center" data-bar="gear1:23 gear2:23"></div><div class="flex h-[30px] items-center" data-bar="dash:23"></div></div>
  <div class="flex h-3 items-center pr-1.5 pl-px text-[#12607a]"><span class="flex-1 whitespace-nowrap">齿轮...</span><svg class="h-1 w-[7px]"><use href="#tri"/></svg></div></div>
 <span class="mt-[5px] h-[84px] w-px bg-[#d0d0d0]"></span>
 <div class="flex w-[57px] flex-col"><div class="flex h-[78px] flex-col pt-1.5 pl-1"><div class="flex h-[30px] items-center" data-bar="spr1:23 spr2:23"></div><div class="flex h-[30px] items-center" data-bar="ring:23 | scis:23"></div></div>
  <div class="flex h-3 items-center pr-[7px] pl-1 text-[#12607a]"><span class="flex-1 whitespace-nowrap">弹簧...</span><svg class="h-1 w-[7px]"><use href="#tri"/></svg></div></div>
 <span class="mt-[5px] h-[84px] w-px bg-[#d0d0d0]"></span>
 <div class="flex w-[51px] flex-col"><div class="flex h-[78px] flex-col pt-1.5 pl-1"><div class="flex h-[30px] items-center" data-bar="chkv:23 bld:23"></div><div class="flex h-[30px] items-center" data-bar="gridv:23 csys:23"></div></div>
  <div class="flex h-3 items-center pr-[7px] pl-px text-[#12607a]"><span class="flex-1 whitespace-nowrap">加工...</span><svg class="h-1 w-[7px]"><use href="#tri"/></svg></div></div>
 <span class="mt-[5px] h-[84px] w-px bg-[#d0d0d0]"></span>
 <div class="flex w-[97px] flex-col"><div class="flex h-[78px] flex-col pt-1.5 pl-1"><div class="flex h-[30px] items-center" data-bar="triup:23 tbl:23 fold1:23 fold2:23"></div><div class="flex h-[30px] items-center" data-bar="note:23 brush:23 | bin7:23"></div></div>
  <div class="flex h-3 items-center pr-[7px] pl-1 text-[#12607a]"><span class="flex-1 whitespace-nowrap">建模工具 - G...</span><svg class="h-1 w-[7px]"><use href="#tri"/></svg></div></div>
 <span class="mt-[5px] h-[84px] w-px bg-[#d0d0d0]"></span>
 <div class="flex w-7 flex-col"><div class="flex h-[78px] flex-col pt-1.5 pl-1"><div class="flex h-[30px] items-center" data-bar="boxes:23"></div><div class="flex h-[30px] items-center" data-bar="boxes:23"></div></div>
  <div class="flex h-3 items-center pr-[7px] pl-px text-[#12607a]"><span class="flex-1 whitespace-nowrap">?..</span><svg class="h-1 w-[7px]"><use href="#tri"/></svg></div></div>
 <span class="mt-[5px] h-[84px] w-px bg-[#d0d0d0]"></span>
 <div class="flex w-[287px] flex-col"><div class="flex h-[78px] flex-col pt-1.5 pl-1"><div class="flex h-[30px] items-center" data-bar="dim:23 | X:23 t1:23 t2:23 t3:23 t4:23 Xb:23 Xp:23 h1:23 h2:23 h2:23 h3:23"></div><div class="flex h-[30px] items-center" data-bar="r1:23 r2:23 | r3:23 r4:23 ret:23"></div></div>
  <div class="flex h-3 items-center pr-[7px] text-[#12607a]"><span class="flex-1 text-center">尺寸快速格式化工具 - GC工具箱</span><svg class="h-1 w-[7px]"><use href="#tri"/></svg></div></div>
 <span class="mt-[5px] h-[84px] w-px bg-[#d0d0d0]"></span>
 <button class="flex w-[42px] flex-col items-center pt-[5px]"><svg class="size-[30px]"><use href="#surf"/></svg><span class="mt-1.5">曲面</span><svg class="mt-[5px] h-1 w-[7px]"><use href="#tri"/></svg></button>
 <span class="mt-[5px] h-[84px] w-px bg-[#d0d0d0]"></span>
 <div class="flex w-[180px] flex-col pt-px">
  <div class="flex h-[77px] pl-2.5">
   <button disabled class="flex w-12 flex-col items-center pt-1 text-[#b8b8b8]"><svg class="size-[30px]"><use href="#procasm"/></svg><span class="mt-1.5">处理装配</span></button>
   <button class="flex w-[44px] flex-col items-center pt-1"><svg class="size-[30px]"><use href="#addc"/></svg><span class="mt-1.5">添加</span><svg class="mt-[5px] h-1 w-[7px]"><use href="#tri"/></svg></button>
   <div class="ml-1 flex flex-col">
    <button class="flex h-[22px] items-center gap-1"><svg class="size-4"><use href="#cons"/></svg>装配约束</button>
    <button class="flex h-[22px] items-center gap-1"><svg class="size-4"><use href="#movec"/></svg>移动组件</button>
    <button class="flex h-[22px] items-center gap-1"><svg class="size-4"><use href="#arrc"/></svg>阵列组件</button>
   </div>
  </div>
  <div class="flex h-3 items-center pr-2 text-[#12607a]"><span class="flex-1 pl-[70px]">装配</span><svg class="h-1 w-[7px]"><use href="#tri"/></svg></div>
 </div>
 <span class="mt-[5px] h-[84px] w-px bg-[#d0d0d0]"></span>
 <div class="flex flex-1 items-end justify-end pr-1.5 pb-[7px]"><svg class="h-1 w-[7px]"><use href="#tri"/></svg></div>
</section>

<!-- selection bar -->
<section aria-label="选择条" class="flex h-[33px] shrink-0 items-center border-b border-[#8d9499]">
 <button class="flex w-[86px] items-center gap-1 pl-2.5"><svg class="size-4"><use href="#menu"/></svg><span>菜单(<u>M</u>)</span><svg class="h-1 w-[7px]"><use href="#tri"/></svg></button>
 <span class="h-6 w-px bg-[#d0d0d0]"></span>
 <div class="relative ml-3 w-[133px]"><select aria-label="类型过滤器" class="block h-5 w-full appearance-none border border-[#8c8c8c] bg-white pl-0.5 text-[11px] leading-[18px]"><option>无选择过滤器</option></select><svg class="absolute top-2 right-1.5 h-1 w-[7px]"><use href="#tri"/></svg></div>
 <div class="relative ml-2.5 w-[139px]"><select aria-label="选择范围" class="block h-5 w-full appearance-none border border-[#8c8c8c] bg-white pl-0.5 text-[11px] leading-[18px]"><option>整个装配</option></select><svg class="absolute top-2 right-1.5 h-1 w-[7px]"><use href="#tri"/></svg></div>
 <div class="flex items-center pl-[3px]" data-bar="sg1:26 sg2:24 selp:20 tri:15 sg3:24 sg4:25 sel5:25 sel6:25 tri:14 s1*:24 cube:24 s3*:25 s4*:24 s5*:25 s6:27 s7*:25 s8*:24 s9:25 s10*:25 s11:25 s12*:25 s13*:25 s14:25 s15:25 s16:25 | v1:36 v2:18 v3:31 v4:22 v5:26 v6:26 tri:10 v7:26 tri:10 v8:27 tri:10 v9:26 tri:12 |"></div>
 <div class="flex flex-1 justify-end pt-2.5 pr-1.5"><svg class="h-1 w-[7px]"><use href="#tri"/></svg></div>
</section>

<main class="flex min-h-0 flex-1">
 <!-- resource bar -->
 <nav aria-label="资源条" class="flex w-8 shrink-0 flex-col items-stretch border-r border-[#9a9a9a] bg-[#dcdcdc] pl-1">
  <button aria-label="资源条选项" class="mb-[19px] grid h-6 place-items-center pr-1.5 text-[#333]"><svg class="size-[13px]"><use href="#gearo"/></svg></button>
  <button aria-label="装配导航器" class="grid h-10 place-items-center"><svg class="size-[22px]"><use href="#b1"/></svg></button>
  <button aria-label="约束导航器" class="grid h-10 place-items-center"><svg class="size-[22px]"><use href="#b2"/></svg></button>
  <button aria-label="部件导航器" class="-mr-px -ml-1 grid h-[45px] place-items-center border border-r-0 border-[#9a9a9a] bg-white pl-1"><svg class="size-[22px]"><use href="#b3"/></svg></button>
  <button aria-label="重用库" class="grid h-10 place-items-center"><svg class="size-6"><use href="#b4"/></svg></button>
  <button aria-label="HD3D 工具" class="mt-3.5 grid h-10 place-items-center"><svg class="size-6"><use href="#b5"/></svg></button>
  <button aria-label="Web 浏览器" class="mt-3.5 grid h-10 place-items-center"><svg class="size-[22px]"><use href="#b6"/></svg></button>
  <button aria-label="历史记录" class="mt-3 grid h-[42px] place-items-center"><svg class="size-[22px]"><use href="#b7"/></svg></button>
  <button aria-label="可视化" class="grid h-[42px] place-items-center"><svg class="size-[22px]"><use href="#b8"/></svg></button>
  <button aria-label="场景" class="grid h-[42px] place-items-center"><svg class="size-[22px]"><use href="#b9"/></svg></button>
  <button aria-label="角色" class="grid h-[42px] place-items-center"><svg class="size-[22px]"><use href="#b10"/></svg></button>
 </nav>

 <!-- part navigator -->
 <aside class="flex w-[332px] shrink-0 flex-col border-r border-[#8a8a8a] bg-white pr-2.5 pl-1.5 text-[12px] leading-5">
  <div class="flex h-7 shrink-0 items-center pr-1.5 pl-1"><h2 class="flex-1">部件导航器</h2><button aria-label="最大化" class="h-[11px] w-3 border border-t-2 border-[#222]"></button></div>
  <div class="flex h-[420px] shrink-0 flex-col border border-[#cfcfcf] px-px">
   <table class="w-full table-fixed border-collapse">
    <colgroup><col class="w-[199px]"><col class="w-[100px]"><col></colgroup>
    <thead><tr class="h-5 bg-[#efefef] text-left">
     <th class="h-5 border-r border-b border-[#d0d0d0] pl-1.5 font-normal"><span class="flex items-center gap-[18px]">名称<svg class="h-1.5 w-[9px]" viewBox="0 0 9 6"><path d="M0 6h9L4.500 0z" fill="#222"/></svg></span></th>
     <th class="border-r border-b border-[#d0d0d0] pl-1.5 font-normal">最新</th>
     <th class="overflow-hidden border-b border-[#d0d0d0] pl-1.5 font-normal whitespace-nowrap">附</th></tr></thead>
    <tbody id="tree"></tbody>
   </table>
   <div class="mt-auto mb-1 flex h-[15px] items-center bg-[#efefef]">
    <svg class="mr-1.5 ml-1 size-2" viewBox="0 0 8 8"><path d="M6 0L2 4l4 4" fill="none" stroke="#444" stroke-width="1.600"/></svg>
    <div class="flex-1"><div class="h-[15px] w-[78%] bg-[#c9c9c9]"></div></div>
    <svg class="mx-1 size-2" viewBox="0 0 8 8"><path d="M2 0l4 4-4 4" fill="none" stroke="#444" stroke-width="1.600"/></svg>
   </div>
  </div>
  <div class="h-[5px] shrink-0 border border-[#a8a8a8] bg-[#dcdcdc]"></div>
  <button class="flex h-[22px] shrink-0 items-center px-[7px] pt-1 text-left text-[14px] text-[#12607a]"><span class="flex-1">相关性</span><svg class="size-2.5" viewBox="0 0 10 10"><path d="M1 1l4 7 4-7" fill="none" stroke="#12607a" stroke-width="2"/></svg></button>
  <div class="flex min-h-0 flex-1 flex-col border border-t-2 border-[#d0d0d0] px-1.5 pb-1.5">
   <button class="flex h-7 shrink-0 items-center pb-0.5 text-left text-[14px] text-[#12607a]"><span class="flex-1">细节</span><svg class="size-2.5" viewBox="0 0 10 10"><path d="M1 9l4-7 4 7" fill="none" stroke="#12607a" stroke-width="2"/></svg></button>
   <div class="min-h-0 flex-1 overflow-hidden border border-[#cfcfcf] p-px">
    <table class="w-full table-fixed border-collapse">
     <colgroup><col class="w-16"><col class="w-10"><col class="w-[88px]"><col></colgroup>
     <thead><tr class="h-5 bg-[#efefef] text-left">
      <th class="h-5 border-r border-b border-[#d0d0d0] pl-1.5 font-normal">参数</th><th class="border-r border-b border-[#d0d0d0] pl-1.5 font-normal">值</th>
      <th class="border-r border-b border-[#d0d0d0] pl-1.5 font-normal"><span class="flex items-center gap-[18px]">表达式<svg class="h-1.5 w-[9px]" viewBox="0 0 9 6"><path d="M0 6h9L4.500 0z" fill="#222"/></svg></span></th><th class="border-b border-[#d0d0d0]"></th></tr></thead>
     <tbody id="detail"></tbody>
    </table>
   </div>
  </div>
  <button class="mb-[5px] flex h-[25px] shrink-0 items-center border-b-2 border-[#d0d0d0] px-[7px] text-left text-[14px] text-[#12607a]"><span class="flex-1">预览</span><svg class="size-2.5" viewBox="0 0 10 10"><path d="M1 1l4 7 4-7" fill="none" stroke="#12607a" stroke-width="2"/></svg></button>
 </aside>

 <!-- graphics window -->
 <section class="relative flex min-w-0 flex-1 flex-col">
  <div class="flex h-[22px] shrink-0 border-b-2 border-[#57a0b8] bg-white">
   <div class="flex w-[176px] items-center gap-1.5 bg-[#57a0b8] pl-2 text-[13px] text-white">
    <svg class="size-3.5 shrink-0" viewBox="0 0 14 14"><path d="M1 4l5-3 3 1v4l4 2-1 4-6 2-5-3z" fill="#2a6cc8" stroke="#bfe0ff" stroke-width=".7"/></svg>
    <span class="flex-1 whitespace-nowrap">CATICS-5-L05_A.prt</span>
    <svg class="size-2.5 shrink-0" viewBox="0 0 10 10"><path d="M1 1h5l2 2v6H1zM3 6h6M7 4l2 2-2 2" fill="none" stroke="#fff"/></svg>
    <button aria-label="关闭部件" class="mr-1"><svg class="size-2.5" viewBox="0 0 10 10"><path d="M1 1l8 8M9 1L1 9" stroke="#fff" stroke-width="1.800"/></svg></button>
   </div>
  </div>
  <div class="relative min-h-0 flex-1 overflow-hidden bg-linear-to-b from-[#b3b5b7] to-[#e6e8e9] to-75%">
   <svg class="absolute top-0 left-0 h-[815px] w-[1000px]" viewBox="0 0 1000 815" role="img" aria-label="CATICS-5-L05_A 三维模型">
    <defs>
     <linearGradient id="rim" gradientUnits="userSpaceOnUse" x1="30" y1="0" x2="1540" y2="0"><stop offset="0" stop-color="#b87100"/><stop offset=".06" stop-color="#cc7a00"/><stop offset=".16" stop-color="#ff9c00"/><stop offset=".36" stop-color="#ffb700"/><stop offset=".62" stop-color="#ffbc00"/><stop offset=".85" stop-color="#ffa000"/><stop offset="1" stop-color="#d98300"/></linearGradient>
     <linearGradient id="hub" gradientUnits="userSpaceOnUse" x1="485" y1="0" x2="1150" y2="0"><stop offset="0" stop-color="#c67800"/><stop offset=".06" stop-color="#d98300"/><stop offset=".18" stop-color="#ff9d00"/><stop offset=".45" stop-color="#ffba00"/><stop offset=".7" stop-color="#ffbe00"/><stop offset="1" stop-color="#f09000"/></linearGradient>
     <linearGradient id="wallL" gradientUnits="userSpaceOnUse" x1="210" y1="0" x2="745" y2="0"><stop offset="0" stop-color="#c87900"/><stop offset=".1" stop-color="#ffb400"/><stop offset=".35" stop-color="#ffb400"/><stop offset=".48" stop-color="#f79600"/><stop offset=".8" stop-color="#ffb800"/><stop offset=".95" stop-color="#ec9200"/><stop offset="1" stop-color="#b87000"/></linearGradient>
     <linearGradient id="wallR" gradientUnits="userSpaceOnUse" x1="820" y1="0" x2="1365" y2="0"><stop offset="0" stop-color="#e08a00"/><stop offset=".08" stop-color="#ffb700"/><stop offset=".5" stop-color="#ffaa00"/><stop offset=".65" stop-color="#ffbe00"/><stop offset=".9" stop-color="#ffa200"/><stop offset="1" stop-color="#b87000"/></linearGradient>
     <linearGradient id="bore" x1="0" y1="0" x2="1" y2="0"><stop offset="0" stop-color="#ffbe00"/><stop offset=".5" stop-color="#ffae00"/><stop offset="1" stop-color="#b87000"/></linearGradient>
     <linearGradient id="cb" x1="0" y1="0" x2="1" y2="0"><stop offset="0" stop-color="#a86700"/><stop offset=".5" stop-color="#c07400"/><stop offset="1" stop-color="#e59000"/></linearGradient>
     <g id="thru"><path fill-rule="evenodd" fill="url(#bore)" vector-effect="non-scaling-stroke" d="M-38 0A38 60 0 1 1 38 0A38 60 0 1 1-38 0ZM-37 12C-38-30-10-62 20-55C24-20 5 18-20 16Q-32 16-37 12Z"/></g>
    </defs>
    <g transform="translate(26 -3) scale(.57398 .35714)" stroke="#3a2500" stroke-opacity=".8" stroke-width="1" stroke-linejoin="round">
     <path vector-effect="non-scaling-stroke" fill="url(#rim)" d="M32 1031C75 780 150 570 250 425C390 225 580 60 820 60C1060 60 1270 210 1400 445C1450 550 1500 690 1535 830C1520 770 1495 690 1450 575C1310 280 1100 104 850 104C640 104 400 225 200 575C110 750 80 900 48 1075L50 1150C35 1110 28 1080 32 1031Z"/>
     <path vector-effect="non-scaling-stroke" fill="none" d="M32 1031L48 1075"/>
     <path vector-effect="non-scaling-stroke" fill="#d27f00" fill-rule="evenodd" d="M48 1075C80 900 110 750 200 575C400 225 640 104 850 104C1100 104 1310 280 1450 575C1495 690 1520 770 1535 830C1548 910 1520 970 1495 1000L1312 1195L1200 1320L1100 1000L879 897L600 1100L325 1390L95 1228C60 1200 45 1150 48 1075Z
      M660 253C690 253 705 270 710 290C722 320 725 330 726 345L742 570C742 620 725 655 690 673C590 715 500 840 457 940C440 985 405 998 368 977L245 890C225 870 212 850 212 825C205 780 212 755 230 715C310 550 440 360 640 260Q650 254 660 253Z
      M900 216C860 216 830 250 827 310L820 545C820 600 835 635 878 646C980 660 1070 740 1130 840C1155 870 1190 865 1211 841L1330 713C1362 680 1372 610 1343 545C1230 370 1100 240 900 216Z
      M736 243A38 60 0 1 1 812 243A38 60 0 1 1 736 243Z M1415 884A38 60 0 1 1 1491 884A38 60 0 1 1 1415 884Z M95 1103A38 60 0 1 1 171 1103A38 60 0 1 1 95 1103Z"/>
     <path vector-effect="non-scaling-stroke" fill="url(#wallL)" d="M710 290C722 320 725 330 726 345L742 570C742 620 725 655 690 673C590 715 500 840 457 940C440 985 405 998 368 977L245 890C225 870 212 850 212 825L218 845L355 940C390 952 425 940 441 897C490 780 570 680 676 630C712 610 728 560 726 510Z"/>
     <path vector-effect="non-scaling-stroke" fill="url(#wallR)" d="M820 545C820 600 835 635 878 646C980 660 1070 740 1130 840C1155 870 1190 865 1211 841L1330 713C1362 680 1372 610 1343 545C1348 600 1340 640 1312 670L1196 798C1170 825 1130 825 1108 792C1050 690 960 615 862 600C845 596 828 590 820 545Z"/>
     <path vector-effect="non-scaling-stroke" fill="#a86800" d="M710 290C722 320 725 330 726 345L742 570L726 510Z"/>
     <path vector-effect="non-scaling-stroke" fill="none" d="M676 630L690 673M441 897L457 940M355 940L368 977M230 850L245 890M862 600L877 646M1108 792L1130 840M1196 798L1211 841M1312 670L1330 713"/>
     <use href="#thru" x="774" y="243"/><use href="#thru" x="1453" y="884"/><use href="#thru" x="133" y="1103"/>
     <!-- clamp hub -->
     <path vector-effect="non-scaling-stroke" fill="url(#hub)" d="M485 1470C483 1350 500 1240 541 1140L507 1040C580 870 690 762 820 762C940 762 1030 850 1085 950L1123 1053C1070 960 990 897 879 897C650 897 495 1150 498 1505Z"/>
     <path vector-effect="non-scaling-stroke" fill="#a86800" d="M318 1071L355 1169L363 1490L325 1390Z"/>
     <path vector-effect="non-scaling-stroke" fill="#d27f00" d="M355 1169L541 1139C500 1240 483 1350 485 1470L363 1490Z"/>
     <path vector-effect="non-scaling-stroke" fill="#ffba00" d="M318 1071L508 1040L541 1139L355 1169Z"/>
     <path vector-effect="non-scaling-stroke" fill="#d27f00" d="M1120 1043L1305 1013L1314 1334L1206 1351C1204 1250 1177 1147 1123 1053Z"/>
     <path vector-effect="non-scaling-stroke" fill="#ffba00" d="M1081 945L1270 914L1305 1013L1120 1043Z"/>
     <ellipse vector-effect="non-scaling-stroke" cx="430" cy="1105" rx="48" ry="27" fill="url(#cb)"/><ellipse vector-effect="non-scaling-stroke" cx="1193" cy="979" rx="48" ry="27" fill="url(#cb)"/>
     <!-- tooth flanks behind the front face -->
     <path vector-effect="non-scaling-stroke" fill="#a86800" d="M1015 1098L1024 1128L1033 1180L1100 1356L1092 1307L1050 1190ZM848 992H868L877 1058L870 1050ZM1130 1358L1144 1358L1146 1399Z"/>
     <path vector-effect="non-scaling-stroke" fill="#ffaf00" d="M1064 1217L1106 1196L1128 1268L1092 1307ZM580 1313L607 1387L568 1360ZM625 1187L646 1245L618 1195Z"/>
     <path vector-effect="non-scaling-stroke" fill="#bd7200" d="M928 1000L978 1023L974 1092L970 1080Z"/>
     <path vector-effect="non-scaling-stroke" fill="#d27f00" d="M498 1505C495 1150 650 897 879 897C1100 897 1200 1150 1206 1390L1146 1399L1144 1358L1100 1356L1092 1307L1128 1268L1106 1196L1064 1217L1046 1174L1070 1119L1031 1068L997 1115L974 1092L978 1023L928 1000L907 1063L877 1058L866 992L815 999L809 1070L778 1085L754 1029L706 1069L718 1135L691 1166L655 1129L620 1190L646 1245L630 1290L587 1280L568 1360L607 1387L603 1438L559 1455L558 1496Z"/>
     <path vector-effect="non-scaling-stroke" fill="#cc7b00" d="M1015 1098L1031 1068L1070 1119L1046 1174Z"/>
    </g>
    <!-- view triad -->
    <g>
     <path d="M67 721l24-3 6 5v30l-26 3-5-5z" fill="#d5d5d5" stroke="#aaa"/><path d="M67 721l5 6 25-4M72 727v27" fill="none" stroke="#999"/>
     <path d="M64 746V714" stroke="#1c7d2c" stroke-width="3"/><path d="M60 718l4-10 4 10z" fill="#1c7d2c"/>
     <path d="M66 748l36-4" stroke="#d98a8a" stroke-width="2"/><path d="M97 740l12 3-11 5z" fill="#cf2e2e"/>
     <path d="M66 749l6 9" stroke="#1133dd" stroke-width="4"/><circle cx="72" cy="758" r="3.500" fill="#1133dd"/><circle cx="64" cy="748" r="3.500" fill="#eee" stroke="#aaa"/>
     <text x="60" y="705" font-size="12" fill="#2e8f3c">Y</text><text x="110" y="747" font-size="13" fill="#cf2e2e">X</text><text x="71" y="768" font-size="12" fill="#1133dd">Z</text>
    </g>
   </svg>

   <!-- information window -->
   <div role="dialog" aria-label="信息" class="absolute top-[124px] right-[114px] flex h-[525px] w-[498px] flex-col border border-[#a0a0a0] bg-[#efefef]">
    <div class="-mx-px -mt-px flex h-7 shrink-0 items-center gap-[9px] bg-[#57a0b8] pr-[7px] pl-1.5 text-white">
     <svg class="size-3.5"><use href="#gearo"/></svg><span class="flex-1 text-[12px]">信息</span>
     <button aria-label="帮助" class="w-3 text-[15px] font-bold">?</button>
     <button aria-label="最小化"><svg class="size-3" viewBox="0 0 12 12"><path d="M2 11h8" stroke="#fff" stroke-width="2"/></svg></button>
     <button aria-label="最大化" class="ml-0.5"><svg class="size-3" viewBox="0 0 12 12"><path d="M.5 1.500h11v10H.5z" fill="none" stroke="#fff" stroke-width="1.300"/></svg></button>
     <button aria-label="关闭"><svg class="size-3" viewBox="0 0 12 12"><path d="M1 1l10 10M11 1L1 11" stroke="#fff" stroke-width="2"/></svg></button>
    </div>
    <div class="flex gap-0.5 pt-1 pl-[9px]" id="infobar"></div>
    <div class="mx-[9px] mt-0.5 mb-3 flex min-h-0 flex-1 border border-[#5c5c5c]">
     <div class="min-w-0 flex-1 overflow-hidden pt-[19px] pr-[9px] pl-2 font-['Liberation_Sans','Noto_Sans_CJK_SC',sans-serif] text-black">
      <table class="w-full table-fixed border-collapse text-[12px] leading-[15px]">
       <colgroup><col class="w-[225px]"><col></colgroup>
       <tbody class="text-left">
        <tr class="h-5 bg-white"><th class="border border-[#dadada] px-0.5 text-[13px] font-bold">信息列表创建者</th><td class="border border-[#dadada] px-0.5">admin</td></tr>
        <tr class="h-5 bg-[#f8f8f8]"><th class="border border-[#dadada] px-0.5 text-[13px] font-bold">日期</th><td class="border border-[#dadada] px-0.5">29-Jun-2020 07:57:48</td></tr>
        <tr class="h-[35px] bg-white"><th class="border border-[#dadada] px-0.5 text-[13px] font-bold">当前工作部件</th><td class="border border-[#dadada] px-0.5">E:\Program Files\Siemens\NX<br>12.0\UGII\CATICS-5-L05_A.prt</td></tr>
        <tr class="h-5 bg-[#f8f8f8]"><th class="border border-[#dadada] px-0.5 text-[13px] font-bold">节点名</th><td class="border border-[#dadada] px-0.5">desktop-25gjil6</td></tr>
       </tbody>
      </table>
      <div class="mt-[21px] h-[330px] border-t border-[#dadada] bg-white pt-1 pl-1 font-['Liberation_Mono','Noto_Sans_CJK_SC',monospace] text-[12px] leading-[15px] whitespace-pre [&_b]:text-[13px] [&_b]:font-normal [&_div]:h-[15px]"><div><b>测量质量属性</b></div><div></div><div><b>显示的质量属性值</b></div><div class="flex"><b class="w-[236px]">体积</b>= 109879.577972139 mm³</div><div class="flex"><b class="w-[236px]">面积</b>= 33980.121765955 mm²</div><div class="flex"><b class="w-[236px]">质量</b>=    0.860427418 kg</div><div class="flex"><b class="w-[236px]">重量</b>=    8.437910543 N</div><div class="flex"><b class="w-[248px]">回转半径</b>=   49.186438529 mm</div><div class="flex"><b class="w-[236px]">质心</b>=    0.000000000,</div><div>29.867576686,   12.878820636 mm</div><div></div><div>============================================================</div><div><b>详细的质量属性</b></div><div class="flex"><b class="w-36">使用精度计算的分析</b>0.990000000</div><div></div><div class="flex"><b class="w-[166px]">密度</b>=    0.000007831 kg/mm³</div><div class="flex"><b class="w-[166px]">体积</b>= 109879.577972139 mm³</div><div class="flex"><b class="w-[166px]">面积</b>= 33980.121765955 mm²</div><div class="flex"><b class="w-[166px]">质量</b>=    0.860427418 kg</div><div></div><div><b>一阶矩</b></div></div>
     </div>
     <div class="flex w-4 flex-col items-center bg-[#efefef]">
      <svg class="my-1 size-2" viewBox="0 0 8 8"><path d="M0 6l4-4 4 4" fill="none" stroke="#444" stroke-width="1.600"/></svg>
      <div class="h-[118px] w-[15px] bg-[#c9c9c9]"></div>
      <svg class="mt-auto mb-1 size-2" viewBox="0 0 8 8"><path d="M0 2l4 4 4-4" fill="none" stroke="#444" stroke-width="1.600"/></svg>
     </div>
    </div>
   </div>
  </div>
 </section>
</main>

<!-- status line -->
<footer class="flex h-[22px] shrink-0 items-center border-t border-[#a0a0a0] bg-white pb-0.5 pl-[3px]">
 <span class="flex-1 font-bold">选择对象并使用 MB3，或者双击某一对象</span>
 <div class="flex gap-1 pr-[55px]"><svg class="size-4"><use href="#flag"/></svg><svg class="size-4"><use href="#full"/></svg></div>
</footer>

<!-- taskbar -->
<div class="flex h-10 shrink-0 items-stretch bg-linear-to-r from-[#20363f] via-[#20333f] to-[#1b2742] text-white">
 <button aria-label="开始" class="grid w-12 place-items-center"><svg class="size-4" viewBox="0 0 16 16"><path d="M0 2.300l7-1v6.200H0zM8 1.100L16 0v7.500H8zM0 8.500h7v6.200l-7-1zM8 8.500h8V16l-8-1.100z" fill="#fff"/></svg></button>
 <label class="flex w-[344px] items-center border border-[#c4c4c4] bg-[#f1f1f1] pl-2.5"><svg class="mr-[11px] size-[18px]" viewBox="0 0 18 18"><circle cx="11" cy="7" r="5" fill="none" stroke="#222" stroke-width="1.300"/><path d="M7.500 11L2 17" stroke="#222" stroke-width="1.300"/></svg><input aria-label="搜索" placeholder="在这里输入你要搜索的内容" class="min-w-0 flex-1 bg-transparent text-[14px] leading-5 outline-none placeholder:text-[#3a3a3a]"></label>
 <button aria-label="Cortana" class="grid w-12 place-items-center"><svg class="size-4" viewBox="0 0 16 16"><circle cx="8" cy="8" r="7" fill="none" stroke="#fff" stroke-width="2"/></svg></button>
 <button aria-label="任务视图" class="grid w-12 place-items-center"><svg class="size-4" viewBox="0 0 16 16"><path d="M1 4h9v8H1zM1 0v2h9V0M1 16v-2h9v2M14 0v16" fill="none" stroke="#fff" stroke-width="1.300"/><path d="M13 5h3v3h-3z" fill="#fff"/></svg></button>
 <button aria-label="Edge" class="mx-[7px] grid w-10 place-items-center border-b-2 border-[#76b9ed] pt-0.5"><svg class="size-6" viewBox="0 0 24 24"><path d="M2 11Q4 1 13 1q9 1 9 12H9q0 6 7 6 3 0 5-1v4q-3 1.500-7 1.500Q4 23 4 14q0-5 6-8Q4 7 2 11zM9 9h7q0-4-3.500-4T9 9z" fill="#1479d2"/></svg></button>
 <button aria-label="文件资源管理器" class="mr-0.5 grid w-11 place-items-center"><svg class="size-6" viewBox="0 0 24 24"><path d="M1 3h8l2 3h12v15H1z" fill="#e8b33a"/><path d="M1 7h22v14H1z" fill="#fcd878"/><path d="M5 22v-9h14v9h-4v-4H9v4z" fill="#4fa0d8"/></svg></button>
 <button aria-label="NX" class="ml-px grid w-[44px] place-items-center border-b-2 border-[#8cc4ef] bg-white/20"><svg class="size-6" viewBox="0 0 24 24"><circle cx="12" cy="13" r="9" fill="#28b4dc"/><path d="M14 5q7 1 7 8t-6 9q4-8-1-17z" fill="#2a60c8"/><path d="M22 8q3 2-3 8T4 23l-2-2q6 1 13-5t7-8z" fill="#f4c83a"/><path d="M3 1l12 0-4 12z" fill="#d8243c"/></svg></button>
 <span class="w-[3px] bg-white/10"></span>
 <div class="flex-1"></div>
 <div class="relative z-10 flex items-center">
  <button aria-label="显示隐藏的图标" class="grid w-6 place-items-center"><svg class="h-2 w-3" viewBox="0 0 12 8"><path d="M1 7l5-5 5 5" fill="none" stroke="#fff" stroke-width="1.300"/></svg></button>
  <button aria-label="网络" class="grid w-6 place-items-center"><svg class="size-4" viewBox="0 0 16 16"><path d="M3 3h12v8H3zM9 11v3M6 14h6M1 2h4v4H1z" fill="none" stroke="#fff"/></svg></button>
  <button aria-label="音量" class="grid w-6 place-items-center"><svg class="size-4" viewBox="0 0 16 16"><path d="M1 6h2l4-4v12l-4-4H1zM9 6q1 2 0 4M11 4q3 4 0 8M13 2q4 6 0 12" fill="none" stroke="#fff"/></svg></button>
  <span class="w-6 text-center text-[13px]">中</span>
  <div class="w-[74px] text-center text-[12px] leading-[19px]"><div>7:58</div><div>2020/6/29</div></div>
  <button aria-label="通知" class="grid w-9 place-items-center"><svg class="size-[17px]" viewBox="0 0 17 17"><path d="M1 1h15v11h-5l-3 3.500V12H1z" fill="none" stroke="#fff" stroke-width="1.200"/></svg></button>
  <span class="mr-1 ml-2.5 h-10 w-px bg-white/40"></span>
 </div>
</div>

<!-- site mark over the lower right corner -->
<div class="pointer-events-none absolute right-6 bottom-3 flex items-center gap-2" aria-hidden="true">
 <svg class="h-[84px] w-[74px] opacity-90" viewBox="0 0 74 84"><path d="M37 1l36 20v42L37 83 1 63V21z" fill="#7fcdf2" opacity=".8"/><path d="M1 21L37 1l15 8Q58 22 56 36 42 12 1 21z" fill="#c2e6f8"/><path d="M18 55q25 20 55 6v2L37 83 20 73z" fill="#0d6cae"/><path d="M52 9l21 12v20Q66 54 56 56 62 30 52 9z" fill="#6cc4ee"/><path d="M1 60Q2 34 22 25" fill="none" stroke="#d6effb"/><path d="M37 19l19 10v26L37 66 18 55V29z" fill="#fff" opacity=".75"/><path d="M21 34l16 8v19l-16-8zM37 42l16-8v19l-16 8zM37 25l16 9-16 8-16-8z" fill="#6cc4ee" stroke="#e8f6fd"/></svg>
 <div class="font-bold text-white/45"><div class="text-[41px] leading-[44px]">3D世界网</div><div class="font-['DejaVu_Sans'] text-[17px] leading-5">WWW.3DSJW.COM</div></div>
</div>

<script>
// data-bar: "icon:width", "*" marks a pressed toggle, "|" a separator
document.querySelectorAll('[data-bar]').forEach(function (bar) {
  bar.innerHTML = bar.dataset.bar.trim().split(/\s+/).map(function (item) {
    if (item === '|') return '<span class="flex h-5 w-1.5 shrink-0 justify-center"><span class="w-px bg-[#d0d0d0]"></span></span>';
    var p = item.split(':'), on = p[0].endsWith('*'), id = p[0].replace('*', '');
    var box = on ? 'grid h-[22px] w-[23px] place-items-center border border-[#a3cbd3] bg-[#cfe6ea]' : 'grid place-items-center';
    var size = id === 'tri' ? 'h-1 w-[7px]' : 'size-4';
    return '<button aria-label="' + id + '" class="grid shrink-0 place-items-center" style="width:' + p[1] + 'px"><span class="' + box + '"><svg class="' + size + '"><use href="#' + id + '"/></svg></span></button>';
  }).join('');
});

document.getElementById('infobar').innerHTML = ['另存为', '打印', '剪切', '复制', '粘贴', '清除', '定位', '查找', '自动换行', '折叠'].map(function (name, i) {
  var c = i === 8 ? 'border-[#fbdc7d] bg-[#fbdc7d]' : 'border-[#a8a8a8] bg-[#efefef]';
  return '<button aria-label="' + name + '" class="grid size-8 place-items-center border ' + c + '"><svg class="size-6"><use href="#d' + (i + 1) + '"/></svg></button>';
}).join('');

var rows = [
  ['+', 'n1', '模型视图'], ['+', 'n2', '摄像机', 'ok'], ['+', 'folderx', '用户表达式'], ['', 'folder', '非时间戳记几何体'], ['-', 'folder', '模型历史记录'],
  ['c', 'csys', '基准坐标系 (0)', 'dim'], ['c', 'nsk', '草图 (1) "SKETCH_0...', 'dim'], ['c', 'nex', '拉伸 (2)'], ['c', 'nex', '拉伸 (3)'], ['c', 'nex', '拉伸 (4)'], ['c', 'ncb', '沉头孔 (5)', 'bold']
];
while (rows.length < 19) rows.push(null);
document.getElementById('tree').innerHTML = rows.map(function (r, i) {
  var name = '', ok = '';
  if (r && r[0] !== 'c') {
    name = '<div class="flex h-[19px] items-center pl-[5px]"><span class="grid w-[9px] place-items-center">' +
      (r[0] ? '<span class="relative grid size-[9px] place-items-center border border-[#bbb] bg-white"><i class="absolute h-px w-[5px] bg-[#222]"></i>' + (r[0] === '+' ? '<i class="absolute h-[5px] w-px bg-[#222]"></i>' : '') + '</span>' : '<i class="h-[19px] border-l border-dotted border-[#999]"></i>') +
      '</span><i class="w-1 border-t border-dotted border-[#999]"></i>' + (r[3] === 'ok' ? '<svg class="mr-px ml-0.5 size-[13px]"><use href="#check"/></svg>' : '') +
      '<svg class="mr-1 size-4"><use href="#' + r[1] + '"/></svg>' + r[2] + '</div>';
  } else if (r) {
    var tone = r[3] === 'dim' ? 'text-[#9a9a9a]' : r[3] === 'bold' ? 'font-bold' : 'text-[#1c1c1c]';
    name = '<div class="flex h-[19px] items-center pl-7 whitespace-nowrap ' + tone + '"><i class="h-[19px] border-l border-dotted border-[#999]"></i><i class="mr-[3px] w-2 border-t border-dotted border-[#999]"></i>' +
      '<span class="relative size-3"><input type="checkbox" checked aria-label="' + r[2].replace(/"/g, '') + '" class="block size-3 appearance-none border border-black bg-white"><svg class="pointer-events-none absolute inset-0 size-3"><use href="#check"/></svg></span>' +
      '<svg class="mr-[3px] ml-[3px] size-[15px]"><use href="#' + r[1] + '"/></svg>' + r[2] + '</div>';
    ok = '<svg class="size-[13px]"><use href="#check"/></svg>';
  }
  return '<tr class="h-5 ' + (i % 2 ? 'bg-[#f8f8f8]' : 'bg-white') + '"><td class="h-5 border-r border-b border-[#e4e4e4] p-0">' + name + '</td><td class="border-r border-b border-[#e4e4e4] py-0 pl-1.5">' + ok + '</td><td class="border-b border-[#e4e4e4]"></td></tr>';
}).join('');
document.getElementById('detail').innerHTML = Array.from({ length: 14 }, function (_, i) {
  return '<tr class="h-5 ' + (i % 2 ? 'bg-[#f8f8f8]' : 'bg-white') + '"><td class="h-5 border-r border-b border-[#e4e4e4]"></td><td class="border-r border-b border-[#e4e4e4]"></td><td class="border-r border-b border-[#e4e4e4]"></td><td class="border-b border-[#e4e4e4]"></td></tr>';
}).join('');
</script>
</body>
</html>
